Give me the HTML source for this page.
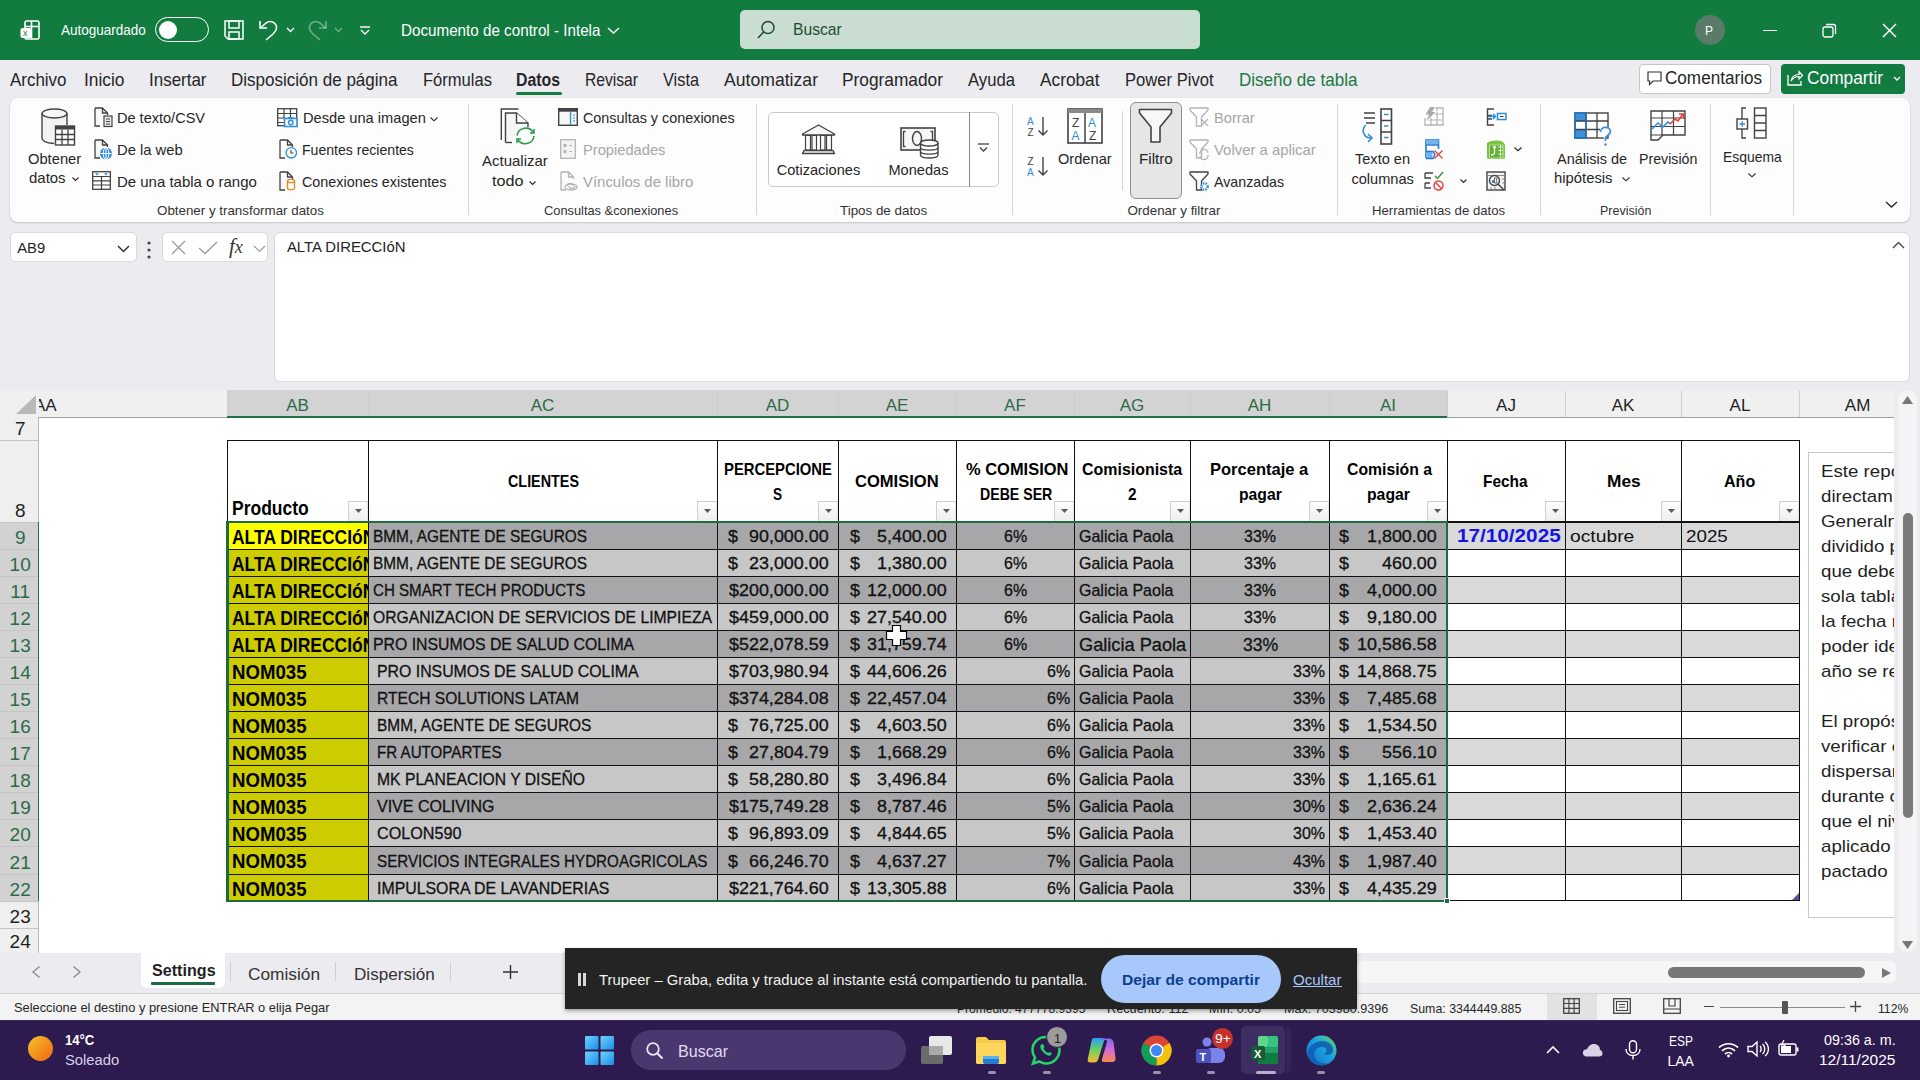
<!DOCTYPE html><html><head><meta charset="utf-8"><title>Excel</title><style>
*{margin:0;padding:0;box-sizing:border-box}
html,body{width:1920px;height:1080px;overflow:hidden;background:#fff;font-family:"Liberation Sans",sans-serif}
.a{position:absolute}
.t{position:absolute;white-space:nowrap;line-height:1}
svg{overflow:visible}
.d{-webkit-text-stroke:0.3px #111}
</style></head><body>
<div class="a" style="left:0px;top:0px;width:1920px;height:60px;background:#117b40;"></div>
<svg class="a" style="left:20px;top:20px;" width="20" height="20" viewBox="0 0 20 20"><rect x="5" y="1" width="14" height="18" rx="1.5" fill="none" stroke="#fff" stroke-width="1.6"/><line x1="11.5" y1="1" x2="11.5" y2="19" stroke="#fff" stroke-width="1.6"/><line x1="5" y1="6.5" x2="19" y2="6.5" stroke="#fff" stroke-width="1.6"/><rect x="0.5" y="8" width="11" height="10" rx="2" fill="#fff"/><text x="3" y="16.3" font-size="9" font-family="Liberation Sans" fill="#117b40">x</text></svg>
<div class="t" style="left:61.25px;top:23.1px;font-size:14px;color:#fff;font-weight:400;transform:scaleX(0.9631);transform-origin:0 0;">Autoguardado</div>
<div class="a" style="left:155px;top:17px;width:54px;height:25px;border:1.5px solid #fff;border-radius:13px"></div>
<div class="a" style="left:159px;top:21px;width:18px;height:18px;background:#fff;border-radius:50%"></div>
<svg class="a" style="left:224px;top:20px;" width="20" height="20" viewBox="0 0 20 20"><path d="M1 1 H19 V19 H4 L1 16 Z" fill="none" stroke="#fff" stroke-width="1.5"/><rect x="5" y="1" width="10" height="7" fill="none" stroke="#fff" stroke-width="1.5"/><rect x="5" y="12" width="10" height="7" fill="none" stroke="#fff" stroke-width="1.5"/></svg>
<svg class="a" style="left:259px;top:20px;" width="20" height="20" viewBox="0 0 20 20"><path d="M1 1 V8 H8" fill="none" stroke="#fff" stroke-width="1.6"/><path d="M1.5 8 L7 3 C11 0 17 2 17.5 7 C18 10 16 12 14 14 L7 20" fill="none" stroke="#fff" stroke-width="1.6"/></svg>
<svg class="a" style="left:286px;top:27px;" width="9" height="6" viewBox="0 0 9 6"><path d="M1 1 L4.5 4.5 L8 1" fill="none" stroke="#fff" stroke-width="1.4"/></svg>
<svg class="a" style="left:307px;top:20px;" width="20" height="20" viewBox="0 0 20 20"><path d="M19 1 V8 H12" fill="none" stroke="rgba(255,255,255,.4)" stroke-width="1.6"/><path d="M18.5 8 L13 3 C9 0 3 2 2.5 7 C2 10 4 12 6 14 L13 20" fill="none" stroke="rgba(255,255,255,.4)" stroke-width="1.6"/></svg>
<svg class="a" style="left:334px;top:27px;" width="9" height="6" viewBox="0 0 9 6"><path d="M1 1 L4.5 4.5 L8 1" fill="none" stroke="rgba(255,255,255,.4)" stroke-width="1.4"/></svg>
<svg class="a" style="left:360px;top:26px;" width="10" height="10" viewBox="0 0 10 10"><line x1="0" y1="1" x2="10" y2="1" stroke="#fff" stroke-width="1.4"/><path d="M1 4 L5 8 L9 4" fill="none" stroke="#fff" stroke-width="1.4"/></svg>
<div class="t" style="left:400.50px;top:21.8px;font-size:16.5px;color:#fff;font-weight:400;transform:scaleX(0.9215);transform-origin:0 0;">Documento de control - Intela</div>
<svg class="a" style="left:607px;top:27px;" width="13" height="7" viewBox="0 0 13 7"><path d="M1 1 L6.5 6 L12 1" fill="none" stroke="#fff" stroke-width="1.5"/></svg>
<div class="a" style="left:740px;top:10px;width:460px;height:39px;background:#c9ddd0;border-radius:5px"></div>
<svg class="a" style="left:757px;top:20px;" width="20" height="20" viewBox="0 0 20 20"><circle cx="11" cy="7.5" r="6" fill="none" stroke="#1d4d33" stroke-width="1.5"/><line x1="6.8" y1="11.8" x2="1" y2="18" stroke="#1d4d33" stroke-width="1.6"/></svg>
<div class="t" style="left:793.00px;top:20.6px;font-size:17px;color:#1d4d33;font-weight:400;transform:scaleX(0.9206);transform-origin:0 0;">Buscar</div>
<div class="a" style="left:1695px;top:15px;width:30px;height:30px;background:#5b7b69;border-radius:50%"></div>
<div class="t" style="left:1705.0px;top:24.8px;font-size:12px;color:#fff;font-weight:400;">P</div>
<div class="a" style="left:1763px;top:30px;width:14px;height:1.4px;background:#fff;"></div>
<svg class="a" style="left:1822px;top:23px;" width="15" height="15" viewBox="0 0 15 15"><rect x="1" y="4" width="10" height="10" rx="2" fill="none" stroke="#fff" stroke-width="1.3"/><path d="M4 1.5 H11.5 Q13.5 1.5 13.5 3.5 V11" fill="none" stroke="#fff" stroke-width="1.3"/></svg>
<svg class="a" style="left:1882px;top:23px;" width="15" height="15" viewBox="0 0 15 15"><path d="M1 1 L14 14 M14 1 L1 14" stroke="#fff" stroke-width="1.5"/></svg>
<div class="a" style="left:0px;top:60px;width:1920px;height:330px;background:#ebebf0;"></div>
<div class="t" style="left:10.00px;top:71.1px;font-size:18.5px;color:#262626;font-weight:400;transform:scaleX(0.9157);transform-origin:0 0;">Archivo</div>
<div class="t" style="left:84.00px;top:71.1px;font-size:18.5px;color:#262626;font-weight:400;transform:scaleX(0.9375);transform-origin:0 0;">Inicio</div>
<div class="t" style="left:149.00px;top:71.1px;font-size:18.5px;color:#262626;font-weight:400;transform:scaleX(0.9171);transform-origin:0 0;">Insertar</div>
<div class="t" style="left:231.00px;top:71.1px;font-size:18.5px;color:#262626;font-weight:400;transform:scaleX(0.9199);transform-origin:0 0;">Disposición de página</div>
<div class="t" style="left:423.00px;top:71.1px;font-size:18.5px;color:#262626;font-weight:400;transform:scaleX(0.8949);transform-origin:0 0;">Fórmulas</div>
<div class="t" style="left:516.00px;top:71.1px;font-size:18.5px;color:#262626;font-weight:700;transform:scaleX(0.8560);transform-origin:0 0;">Datos</div>
<div class="t" style="left:585.00px;top:71.1px;font-size:18.5px;color:#262626;font-weight:400;transform:scaleX(0.8453);transform-origin:0 0;">Revisar</div>
<div class="t" style="left:663.00px;top:71.1px;font-size:18.5px;color:#262626;font-weight:400;transform:scaleX(0.8824);transform-origin:0 0;">Vista</div>
<div class="t" style="left:724.00px;top:71.1px;font-size:18.5px;color:#262626;font-weight:400;transform:scaleX(0.9524);transform-origin:0 0;">Automatizar</div>
<div class="t" style="left:842.00px;top:71.1px;font-size:18.5px;color:#262626;font-weight:400;transform:scaleX(0.9352);transform-origin:0 0;">Programador</div>
<div class="t" style="left:968.00px;top:71.1px;font-size:18.5px;color:#262626;font-weight:400;transform:scaleX(0.9021);transform-origin:0 0;">Ayuda</div>
<div class="t" style="left:1040.00px;top:71.1px;font-size:18.5px;color:#262626;font-weight:400;transform:scaleX(0.9326);transform-origin:0 0;">Acrobat</div>
<div class="t" style="left:1125.00px;top:71.1px;font-size:18.5px;color:#262626;font-weight:400;transform:scaleX(0.8967);transform-origin:0 0;">Power Pivot</div>
<div class="t" style="left:1239.00px;top:71.1px;font-size:18.5px;color:#1b7a45;font-weight:400;transform:scaleX(0.9215);transform-origin:0 0;">Diseño de tabla</div>
<div class="a" style="left:516px;top:92px;width:46px;height:3px;background:#117b40;border-radius:2px"></div>
<div class="a" style="left:1639px;top:64px;width:132px;height:30px;background:#fff;border:1px solid #c6c6c6;border-radius:4px"></div>
<svg class="a" style="left:1647px;top:71px;" width="15" height="15" viewBox="0 0 15 15"><path d="M1 1 H14 V10 H6 L2.5 13.5 V10 H1 Z" fill="none" stroke="#333" stroke-width="1.2"/></svg>
<div class="t" style="left:1665.00px;top:70.2px;font-size:17.5px;color:#262626;font-weight:400;transform:scaleX(0.9778);transform-origin:0 0;">Comentarios</div>
<div class="a" style="left:1781px;top:64px;width:124px;height:30px;background:#117b40;border-radius:4px"></div>
<svg class="a" style="left:1787px;top:70px;" width="16" height="16" viewBox="0 0 16 16"><path d="M1 5 V15 H14 V11" fill="none" stroke="#fff" stroke-width="1.3"/><path d="M4 11 C5 6 8 4.5 12 4.5 V1.5 L15.5 5.5 L12 9 V6.5 C8.5 6.5 6 8 4 11 Z" fill="none" stroke="#fff" stroke-width="1.2"/></svg>
<div class="t" style="left:1807.00px;top:70.2px;font-size:17.5px;color:#fff;font-weight:400;transform:scaleX(0.9896);transform-origin:0 0;">Compartir</div>
<svg class="a" style="left:1893px;top:76px;" width="8" height="5" viewBox="0 0 8 5"><path d="M1 1 L4 4 L7 1" fill="none" stroke="#fff" stroke-width="1.3"/></svg>
<div class="a" style="left:10px;top:98px;width:1900px;height:124px;background:#fdfdfd;border-radius:8px;box-shadow:0 1px 2px rgba(0,0,0,.16),0 0 1px rgba(0,0,0,.12)"></div>
<div class="a" style="left:468px;top:104px;width:1px;height:111px;background:#d6d6d6;"></div>
<div class="a" style="left:756px;top:104px;width:1px;height:111px;background:#d6d6d6;"></div>
<div class="a" style="left:1012px;top:104px;width:1px;height:111px;background:#d6d6d6;"></div>
<div class="a" style="left:1337px;top:104px;width:1px;height:111px;background:#d6d6d6;"></div>
<div class="a" style="left:1540px;top:104px;width:1px;height:111px;background:#d6d6d6;"></div>
<div class="a" style="left:1710px;top:104px;width:1px;height:111px;background:#d6d6d6;"></div>
<div class="a" style="left:1793px;top:104px;width:1px;height:111px;background:#d6d6d6;"></div>
<div class="a" style="left:1122px;top:111px;width:1px;height:79px;background:#d6d6d6;"></div>
<div class="t" style="left:157.30px;top:203.5px;font-size:13.4px;color:#333;font-weight:400;transform:scaleX(0.9964);transform-origin:0 0;">Obtener y transformar datos</div>
<div class="t" style="left:544.30px;top:203.5px;font-size:13.4px;color:#333;font-weight:400;transform:scaleX(0.9579);transform-origin:0 0;">Consultas &amp;conexiones</div>
<div class="t" style="left:840.30px;top:203.5px;font-size:13.4px;color:#333;font-weight:400;transform:scaleX(0.9989);transform-origin:0 0;">Tipos de datos</div>
<div class="t" style="left:1127.40px;top:203.5px;font-size:13.4px;color:#333;font-weight:400;transform:scaleX(1.0000);transform-origin:0 0;">Ordenar y filtrar</div>
<div class="t" style="left:1371.50px;top:203.5px;font-size:13.4px;color:#333;font-weight:400;transform:scaleX(0.9823);transform-origin:0 0;">Herramientas de datos</div>
<div class="t" style="left:1599.50px;top:203.5px;font-size:13.4px;color:#333;font-weight:400;transform:scaleX(0.9328);transform-origin:0 0;">Previsión</div>
<svg class="a" style="left:41px;top:108px;" width="34" height="38" viewBox="0 0 34 38"><path d="M1 5.5 V30 C1 33 6 35 13 35.5 H14 V18 H26 V5.5 Z" fill="#f3f3f3"/><line x1="1" y1="5.5" x2="1" y2="30" stroke="#424242" stroke-width="1.4"/><path d="M1 30 C1 33 6 35 13 35.5" fill="none" stroke="#424242" stroke-width="1.4"/><line x1="26" y1="5.5" x2="26" y2="17" stroke="#424242" stroke-width="1.4"/><ellipse cx="13.5" cy="5.5" rx="12.5" ry="4.5" fill="#f7f7f7" stroke="#424242" stroke-width="1.4"/><rect x="14.5" y="18" width="19" height="19" fill="#fff" stroke="#424242" stroke-width="1.4"/><rect x="14.5" y="18" width="19" height="3.5" fill="#424242"/><path d="M14.5 26.5 H33.5 M14.5 31.5 H33.5 M21 21.5 V37 M27 21.5 V37" stroke="#424242" stroke-width="1.3"/></svg>
<div class="t" style="left:28.20px;top:151.6px;font-size:14.6px;color:#262626;font-weight:400;transform:scaleX(1.0076);transform-origin:0 0;">Obtener</div>
<div class="t" style="left:29.00px;top:171.4px;font-size:14.6px;color:#262626;font-weight:400;transform:scaleX(1.0252);transform-origin:0 0;">datos</div>
<svg class="a" style="left:72px;top:177px;" width="7" height="5" viewBox="0 0 7 5"><path d="M.5 .5 L3.5 3.5 L6.5 .5" fill="none" stroke="#262626" stroke-width="1.1"/></svg>
<svg class="a" style="left:94px;top:107px;" width="19" height="20" viewBox="0 0 19 20"><path d="M1 1 H8.5 L13.5 6 V8 M13.5 6 H8.5 V1 M1 1 V19 H6" fill="#f7f7f7" stroke="#424242" stroke-width="1.3"/><rect x="10" y="9" width="8" height="10.5" fill="#e8e8e8" stroke="#424242" stroke-width="1.2"/><path d="M12 12 H16 M12 14.5 H16 M12 17 H16" stroke="#424242" stroke-width="1"/></svg>
<div class="t" style="left:117.30px;top:110.8px;font-size:14.6px;color:#262626;font-weight:400;transform:scaleX(0.9955);transform-origin:0 0;">De texto/CSV</div>
<svg class="a" style="left:94px;top:139px;" width="19" height="21" viewBox="0 0 19 21"><path d="M1 1 H8.5 L13.5 6 V8 M13.5 6 H8.5 V1 M1 1 V19 H6" fill="#f7f7f7" stroke="#424242" stroke-width="1.3"/><circle cx="12" cy="14.5" r="6" fill="#2f8fdc"/><path d="M6.5 14.5 H17.5 M12 8.5 V20.5" stroke="#fff" stroke-width="1"/><ellipse cx="12" cy="14.5" rx="2.8" ry="6" fill="none" stroke="#fff" stroke-width="1"/></svg>
<div class="t" style="left:117.30px;top:142.6px;font-size:14.6px;color:#262626;font-weight:400;transform:scaleX(1.0123);transform-origin:0 0;">De la web</div>
<svg class="a" style="left:92px;top:171px;" width="19" height="19" viewBox="0 0 19 19"><rect x=".7" y=".7" width="17.6" height="17.6" fill="#fff" stroke="#424242" stroke-width="1.3"/><path d="M.7 5.5 H18.3 M.7 9.8 H18.3 M.7 14 H18.3 M9.5 5.5 V18.3" stroke="#424242" stroke-width="1.2"/><path d="M3 2.3 L5 4.6 L7 2.3 Z M12 2.3 L14 4.6 L16 2.3 Z" fill="#2f8fdc"/></svg>
<div class="t" style="left:117.30px;top:174.6px;font-size:14.6px;color:#262626;font-weight:400;transform:scaleX(1.0257);transform-origin:0 0;">De una tabla o rango</div>
<svg class="a" style="left:277px;top:108px;" width="20" height="19" viewBox="0 0 20 19"><rect x=".7" y=".7" width="19" height="17" fill="#fff" stroke="#424242" stroke-width="1.3"/><path d="M.7 5.5 H19.7 M.7 10 H8 M.7 14.5 H8 M7 .7 V10 M13.5 .7 V10" stroke="#424242" stroke-width="1.2"/><rect x="7.5" y="10.5" width="12.5" height="8" fill="#fff" stroke="#2f8fdc" stroke-width="1.6"/><path d="M10 10.5 L11 9 H16 L17 10.5" fill="#2f8fdc"/><circle cx="13.75" cy="14.5" r="2.2" fill="none" stroke="#2f8fdc" stroke-width="1.4"/></svg>
<div class="t" style="left:302.80px;top:110.8px;font-size:14.6px;color:#262626;font-weight:400;transform:scaleX(1.0024);transform-origin:0 0;">Desde una imagen</div>
<svg class="a" style="left:430px;top:117px;" width="8" height="5" viewBox="0 0 8 5"><path d="M.5 .5 L4 3.8 L7.5 .5" fill="none" stroke="#262626" stroke-width="1.1"/></svg>
<svg class="a" style="left:279px;top:139px;" width="19" height="20" viewBox="0 0 19 20"><path d="M1 1 H8.5 L13.5 6 V8 M13.5 6 H8.5 V1 M1 1 V19 H6" fill="#f7f7f7" stroke="#424242" stroke-width="1.3"/><circle cx="12.3" cy="13.8" r="5.2" fill="#fff" stroke="#2f8fdc" stroke-width="1.4"/><path d="M12 11 V14 H14.5" fill="none" stroke="#424242" stroke-width="1.1"/></svg>
<div class="t" style="left:302.40px;top:142.6px;font-size:14.6px;color:#262626;font-weight:400;transform:scaleX(0.9647);transform-origin:0 0;">Fuentes recientes</div>
<svg class="a" style="left:279px;top:171px;" width="19" height="20" viewBox="0 0 19 20"><path d="M1 1 H8.5 L13.5 6 V8 M13.5 6 H8.5 V1 M1 1 V19 H6" fill="#f7f7f7" stroke="#424242" stroke-width="1.3"/><path d="M8.5 10 V17.5 C8.5 19 15.5 19 15.5 17.5 V10" fill="#fff" stroke="#e08a2c" stroke-width="1.4"/><ellipse cx="12" cy="10" rx="3.5" ry="1.6" fill="#fff" stroke="#e08a2c" stroke-width="1.4"/></svg>
<div class="t" style="left:302.00px;top:174.6px;font-size:14.6px;color:#262626;font-weight:400;transform:scaleX(0.9837);transform-origin:0 0;">Conexiones existentes</div>
<svg class="a" style="left:500px;top:108px;" width="37" height="37" viewBox="0 0 37 37"><path d="M1.3 32 V1 H18.5" fill="none" stroke="#424242" stroke-width="1.4"/><path d="M5.5 34.5 V5 H16.5 L28 15 V19" fill="#f6f6f6" stroke="#424242" stroke-width="1.4"/><path d="M16.5 5 V15 H28" fill="#fff" stroke="#424242" stroke-width="1.4"/><path d="M5.5 34.5 H12" stroke="#424242" stroke-width="1.4"/><path d="M17 27.5 A8.8 8.8 0 0 1 33.5 25 M34 28 A8.8 8.8 0 0 1 17.5 31" fill="none" stroke="#2e9a4c" stroke-width="1.6"/><path d="M30 25 H34 V21" fill="none" stroke="#2e9a4c" stroke-width="1.6"/><path d="M21 31 H17 V35" fill="none" stroke="#2e9a4c" stroke-width="1.6"/></svg>
<div class="t" style="left:482.20px;top:154.1px;font-size:14.6px;color:#262626;font-weight:400;transform:scaleX(1.0265);transform-origin:0 0;">Actualizar</div>
<div class="t" style="left:492.20px;top:174.4px;font-size:14.6px;color:#262626;font-weight:400;transform:scaleX(1.1092);transform-origin:0 0;">todo</div>
<svg class="a" style="left:529px;top:181px;" width="7" height="5" viewBox="0 0 7 5"><path d="M.5 .5 L3.5 3.5 L6.5 .5" fill="none" stroke="#262626" stroke-width="1.1"/></svg>
<svg class="a" style="left:558px;top:108px;" width="20" height="18" viewBox="0 0 20 18"><rect x=".7" y=".7" width="18.6" height="16.6" fill="#f7f7f7" stroke="#424242" stroke-width="1.4"/><rect x=".7" y=".7" width="18.6" height="3" fill="#424242"/><line x1="12.5" y1="3.5" x2="12.5" y2="17.3" stroke="#2f8fdc" stroke-width="1.3"/><path d="M15 7 H17 M15 10 H17 M15 13 H17" stroke="#2f8fdc" stroke-width="1.2"/></svg>
<div class="t" style="left:583.00px;top:110.8px;font-size:14.6px;color:#262626;font-weight:400;transform:scaleX(0.9844);transform-origin:0 0;">Consultas y conexiones</div>
<svg class="a" style="left:560px;top:139px;" width="16" height="20" viewBox="0 0 16 20"><rect x=".7" y=".7" width="14.6" height="18.6" fill="#f4f4f4" stroke="#b4b4b4" stroke-width="1.3"/><rect x="3.5" y="5" width="3" height="3" fill="#b4b4b4"/><rect x="3.5" y="11" width="3" height="3" fill="#b4b4b4"/><path d="M9 6.5 H12 M9 12.5 H12" stroke="#b4b4b4" stroke-width="1"/></svg>
<div class="t" style="left:583.00px;top:142.9px;font-size:14.6px;color:#a6a6a6;font-weight:400;transform:scaleX(1.0061);transform-origin:0 0;">Propiedades</div>
<svg class="a" style="left:560px;top:171px;" width="19" height="20" viewBox="0 0 19 20"><path d="M1 1 H8.5 L13.5 6 V8 M13.5 6 H8.5 V1 M1 1 V19 H6" fill="#f7f7f7" stroke="#b4b4b4" stroke-width="1.3"/><path d="M7 15 a3 2.5 0 0 1 6 0 M9 15 a3 2.5 0 0 0 6 0" fill="none" stroke="#b4b4b4" stroke-width="1.3"/><ellipse cx="11" cy="16" rx="6" ry="3" fill="none" stroke="#b4b4b4" stroke-width="1.3"/></svg>
<div class="t" style="left:583.00px;top:174.6px;font-size:14.6px;color:#a6a6a6;font-weight:400;transform:scaleX(1.0222);transform-origin:0 0;">Vínculos de libro</div>
<div class="a" style="left:768px;top:112px;width:231px;height:75px;background:#fff;border:1px solid #c9c9c9;border-radius:5px"></div>
<div class="a" style="left:969px;top:112px;width:1px;height:75px;background:#8a8a8a;"></div>
<svg class="a" style="left:977px;top:143px;" width="13" height="10" viewBox="0 0 13 10"><line x1="1" y1="1" x2="12" y2="1" stroke="#424242" stroke-width="1.3"/><path d="M3 4.5 L6.5 8 L10 4.5" fill="none" stroke="#424242" stroke-width="1.3"/></svg>
<svg class="a" style="left:801px;top:124px;" width="35" height="31" viewBox="0 0 35 31"><path d="M1.5 10 L17.5 1 L33.5 10 V11 H1.5 Z" fill="#f6f6f6" stroke="#424242" stroke-width="1.4" stroke-linejoin="round"/><path d="M4.5 11.5 H9.5 V26 H4.5 Z M11 11.5 H15.5 V26 H11 Z M19.5 11.5 H24 V26 H19.5 Z M25.5 11.5 H30.5 V26 H25.5 Z" fill="#fafafa" stroke="#424242" stroke-width="1.2"/><path d="M3 26.5 H32 L33.5 29.5 H1.5 Z" fill="#f6f6f6" stroke="#424242" stroke-width="1.4" stroke-linejoin="round"/></svg>
<div class="t" style="left:776.70px;top:162.9px;font-size:14.6px;color:#262626;font-weight:400;transform:scaleX(1.0000);transform-origin:0 0;">Cotizaciones</div>
<svg class="a" style="left:900px;top:127px;" width="40" height="33" viewBox="0 0 40 33"><rect x="1" y="1" width="34" height="22" fill="#f6f6f6" stroke="#424242" stroke-width="1.6"/><path d="M5.5 4.5 H3.5 V19.5 H5.5 M30.5 4.5 H32.5 V19.5 H30.5" fill="none" stroke="#424242" stroke-width="1.3"/><ellipse cx="17" cy="11.5" rx="4.5" ry="7" fill="none" stroke="#424242" stroke-width="1.4"/><path d="M20.5 16 V28 C20.5 32 38 32 38 28 V16" fill="#fff" stroke="#424242" stroke-width="1.4"/><ellipse cx="29.25" cy="16" rx="8.75" ry="3" fill="#fff" stroke="#424242" stroke-width="1.4"/><path d="M20.5 20.5 C20.5 24 38 24 38 20.5 M20.5 24.5 C20.5 28 38 28 38 24.5" fill="none" stroke="#424242" stroke-width="1.3"/></svg>
<div class="t" style="left:888.40px;top:162.9px;font-size:14.6px;color:#262626;font-weight:400;transform:scaleX(1.0000);transform-origin:0 0;">Monedas</div>
<svg class="a" style="left:1027px;top:116px;" width="22" height="21" viewBox="0 0 22 21"><text x="0" y="9" font-size="10" font-family="Liberation Sans" fill="#2f8fdc">A</text><text x="0.5" y="20" font-size="10" font-family="Liberation Sans" fill="#424242">Z</text><path d="M16 1 V19 M11.5 14.5 L16 19 L20.5 14.5" fill="none" stroke="#424242" stroke-width="1.4"/></svg>
<svg class="a" style="left:1027px;top:156px;" width="22" height="21" viewBox="0 0 22 21"><text x="0.5" y="9" font-size="10" font-family="Liberation Sans" fill="#424242">Z</text><text x="0" y="20" font-size="10" font-family="Liberation Sans" fill="#2f8fdc">A</text><path d="M16 1 V19 M11.5 14.5 L16 19 L20.5 14.5" fill="none" stroke="#424242" stroke-width="1.4"/></svg>
<svg class="a" style="left:1067px;top:108px;" width="36" height="36" viewBox="0 0 36 36"><rect x="1" y="1" width="34" height="34" fill="#fff" stroke="#424242" stroke-width="1.6"/><rect x="1" y="1" width="34" height="4" fill="#8a8a8a"/><line x1="18" y1="5" x2="18" y2="35" stroke="#424242" stroke-width="1.5"/><text x="5" y="19" font-size="12" font-family="Liberation Sans" fill="#424242">Z</text><text x="4.5" y="32" font-size="12" font-family="Liberation Sans" fill="#2f8fdc">A</text><text x="21" y="19" font-size="12" font-family="Liberation Sans" fill="#2f8fdc">A</text><text x="22" y="32" font-size="12" font-family="Liberation Sans" fill="#424242">Z</text></svg>
<div class="t" style="left:1058.00px;top:151.5px;font-size:14.6px;color:#262626;font-weight:400;transform:scaleX(1.0019);transform-origin:0 0;">Ordenar</div>
<div class="a" style="left:1130px;top:102px;width:52px;height:97px;background:#e6e6e6;border:1px solid #8f8f8f;border-radius:6px"></div>
<svg class="a" style="left:1138px;top:108px;" width="35" height="36" viewBox="0 0 35 36"><path d="M1.5 1.5 H33.5 V5 L22 19 V34 H13 V19 L1.5 5 Z" fill="#f7f7f7" stroke="#424242" stroke-width="1.6" stroke-linejoin="round"/></svg>
<div class="t" style="left:1138.90px;top:151.5px;font-size:14.6px;color:#262626;font-weight:400;transform:scaleX(1.0432);transform-origin:0 0;">Filtro</div>
<svg class="a" style="left:1189px;top:107px;" width="21" height="21" viewBox="0 0 21 21"><path d="M1 1 H19 V3 L12.5 10 V19 H7.5 V10 L1 3 Z" fill="#fff" stroke="#b4b4b4" stroke-width="1.3" stroke-linejoin="round"/><path d="M12 12 L19 19 M19 12 L12 19" stroke="#b4b4b4" stroke-width="1.3"/></svg>
<div class="t" style="left:1214.20px;top:110.8px;font-size:14.6px;color:#a6a6a6;font-weight:400;transform:scaleX(1.0025);transform-origin:0 0;">Borrar</div>
<svg class="a" style="left:1189px;top:139px;" width="21" height="21" viewBox="0 0 21 21"><path d="M1 1 H19 V3 L12.5 10 V19 H7.5 V10 L1 3 Z" fill="#fff" stroke="#b4b4b4" stroke-width="1.3" stroke-linejoin="round"/><path d="M11 15 A4 4 0 0 1 19 14 M19 16 A4 4 0 0 1 11 17" fill="none" stroke="#b4b4b4" stroke-width="1.3"/></svg>
<div class="t" style="left:1214.20px;top:142.6px;font-size:14.6px;color:#a6a6a6;font-weight:400;transform:scaleX(1.0200);transform-origin:0 0;">Volver a aplicar</div>
<svg class="a" style="left:1189px;top:171px;" width="21" height="21" viewBox="0 0 21 21"><path d="M1 1 H19 V3 L12.5 10 V19 H7.5 V10 L1 3 Z" fill="#fff" stroke="#424242" stroke-width="1.3" stroke-linejoin="round"/><circle cx="15.5" cy="15.5" r="3.2" fill="#fff" stroke="#2f8fdc" stroke-width="2.4" stroke-dasharray="1.6 1"/></svg>
<div class="t" style="left:1214.20px;top:174.6px;font-size:14.6px;color:#262626;font-weight:400;transform:scaleX(0.9750);transform-origin:0 0;">Avanzadas</div>
<svg class="a" style="left:1361px;top:108px;" width="40" height="37" viewBox="0 0 40 37"><path d="M3 5 H14 M3 10 H14 M5 15 H14" stroke="#424242" stroke-width="1.6"/><path d="M5 17 C0 21 2 30 10 30" fill="none" stroke="#2f8fdc" stroke-width="1.6"/><path d="M7 26 L11 30 L7 34" fill="none" stroke="#2f8fdc" stroke-width="1.6"/><rect x="20" y="1" width="10.5" height="35" fill="#fff" stroke="#424242" stroke-width="1.6"/><path d="M20 12.5 H30.5 M20 24 H30.5" stroke="#424242" stroke-width="1.5"/><path d="M23 6.5 H27.5 M23 18 H27.5 M23 29.5 H27.5" stroke="#2f8fdc" stroke-width="1.4"/></svg>
<div class="t" style="left:1354.60px;top:151.5px;font-size:14.6px;color:#262626;font-weight:400;transform:scaleX(0.9964);transform-origin:0 0;">Texto en</div>
<div class="t" style="left:1351.40px;top:171.6px;font-size:14.6px;color:#262626;font-weight:400;transform:scaleX(1.0000);transform-origin:0 0;">columnas</div>
<svg class="a" style="left:1424px;top:107px;" width="20" height="19" viewBox="0 0 20 19"><path d="M8 1 H19 V18 H1 V11" fill="#fff" stroke="#b4b4b4" stroke-width="1.3"/><path d="M1 13 H19 M8 7 H19 M13 1 V18 M7 9 V18" stroke="#b4b4b4" stroke-width="1.2"/><path d="M6 0 H11 L8 5 H11.5 L2.5 14 L5 7.5 H1.5 Z" fill="#fff" stroke="#fff" stroke-width="2"/><path d="M6 0 H11 L8 5 H11.5 L2.5 14 L5 7.5 H1.5 Z" fill="#a9a9a9"/></svg>
<svg class="a" style="left:1424px;top:139px;" width="20" height="21" viewBox="0 0 20 21"><path d="M2 19 V1 H14.5 V10" fill="none" stroke="#1f77d0" stroke-width="1.6"/><rect x="2" y="1" width="12.5" height="4.5" fill="#74b4ee"/><path d="M2 6 H14.5" stroke="#1f77d0" stroke-width="1.4"/><rect x="2" y="13" width="6.5" height="6" fill="#74b4ee"/><path d="M2 12.5 H9 L11 15.5 L9 19.5 H2" fill="none" stroke="#1f77d0" stroke-width="1.4"/><path d="M10.5 11.5 L18.5 19.5 M18.5 11.5 L10.5 19.5" stroke="#e2403b" stroke-width="1.3"/></svg>
<svg class="a" style="left:1424px;top:171px;" width="21" height="20" viewBox="0 0 21 20"><path d="M1 2 H9 M1 2 V7 H7 M1 12 V17 H7 M1 12 H6" fill="none" stroke="#424242" stroke-width="1.3"/><path d="M11 5 L13.5 7.5 L19 1" fill="none" stroke="#2e9a4c" stroke-width="1.5"/><circle cx="14.5" cy="14.5" r="4.5" fill="#fff" stroke="#e2403b" stroke-width="1.5"/><path d="M11.5 11.5 L17.5 17.5" stroke="#e2403b" stroke-width="1.5"/></svg>
<svg class="a" style="left:1460px;top:179px;" width="7" height="5" viewBox="0 0 7 5"><path d="M.5 .5 L3.5 3.5 L6.5 .5" fill="none" stroke="#262626" stroke-width="1.1"/></svg>
<svg class="a" style="left:1486px;top:108px;" width="21" height="18" viewBox="0 0 21 18"><path d="M8 1 H1.5 V7.5 H6 M1.5 7.5 V17 H8 M1.5 11 H6" fill="none" stroke="#424242" stroke-width="1.4"/><path d="M2 8.5 H9.5 M7 6 L9.5 8.5 L7 11" fill="none" stroke="#2b8fdc" stroke-width="1.5"/><rect x="11.5" y="5.5" width="8.5" height="6" fill="#fff" stroke="#2b8fdc" stroke-width="1.5"/><path d="M14 8.5 H17.5" stroke="#424242" stroke-width="1"/></svg>
<svg class="a" style="left:1486px;top:139px;" width="20" height="21" viewBox="0 0 20 21"><path d="M1 4 C5 1 13 1 17 3 L19 6 V19 L17 20 H3 L1 19 Z" fill="#7cc242"/><path d="M3.5 6 H17 V19 H3.5 Z" fill="#63b132" stroke="#c9e7b0" stroke-width=".8"/><path d="M12 8 H17 M12 11.5 H17 M12 15 H17 M14.5 6 V19" stroke="#d8efc6" stroke-width="1"/><path d="M8.5 7.5 V13.5 C8.5 15 7 16 5 16" fill="none" stroke="#fff" stroke-width="1.3"/><path d="M7 9 L8.5 7.2 L10 9" fill="none" stroke="#fff" stroke-width="1.1"/></svg>
<svg class="a" style="left:1514px;top:147px;" width="8" height="5" viewBox="0 0 8 5"><path d="M.5 .5 L4 3.8 L7.5 .5" fill="none" stroke="#262626" stroke-width="1.2"/></svg>
<svg class="a" style="left:1486px;top:171px;" width="20" height="20" viewBox="0 0 20 20"><rect x="1" y="1" width="18" height="18" fill="#f4f4f4" stroke="#424242" stroke-width="1.4"/><path d="M1 4.5 H19 M16 8 H19 M16 12 H19 M5 16 V19 M9 16 V19" stroke="#8a8a8a" stroke-width="1"/><circle cx="8.5" cy="9.5" r="5" fill="#fff" stroke="#424242" stroke-width="1.4"/><rect x="6" y="9" width="2.2" height="3" fill="#2b8fdc"/><rect x="8.6" y="7" width="2.2" height="5" fill="#fff" stroke="#424242" stroke-width=".8"/><path d="M12 13 L18 19" stroke="#424242" stroke-width="1.5"/></svg>
<svg class="a" style="left:1574px;top:112px;" width="39" height="34" viewBox="0 0 39 34"><rect x="1" y="1" width="33" height="25" fill="#fff" stroke="#424242" stroke-width="1.4"/><rect x="1" y="1" width="11" height="8" fill="#3d8fd8"/><rect x="1" y="17.5" width="11" height="8.5" fill="#3d8fd8"/><path d="M1 9 H34 M1 17.5 H26 M12 1 V26 M23 1 V26" stroke="#424242" stroke-width="1.3"/><path d="M1 1 H12 V26 H1 Z" fill="none" stroke="#1f6fc0" stroke-width="1.3"/><path d="M26.5 20 C26.5 14 36.5 14 36.5 19.5 C36.5 23 31.5 23 31.5 27 V29" fill="#fff" stroke="#2f8fdc" stroke-width="1.7"/><circle cx="31.5" cy="32.5" r="1.2" fill="#2f8fdc"/></svg>
<div class="t" style="left:1557.40px;top:151.6px;font-size:14.6px;color:#262626;font-weight:400;transform:scaleX(0.9929);transform-origin:0 0;">Análisis de</div>
<div class="t" style="left:1554.40px;top:170.9px;font-size:14.6px;color:#262626;font-weight:400;transform:scaleX(1.0156);transform-origin:0 0;">hipótesis</div>
<svg class="a" style="left:1622px;top:177px;" width="8" height="5" viewBox="0 0 8 5"><path d="M.5 .5 L4 3.8 L7.5 .5" fill="none" stroke="#262626" stroke-width="1.1"/></svg>
<svg class="a" style="left:1650px;top:110px;" width="36" height="31" viewBox="0 0 36 31"><path d="M1 1 H35 V25 H13 L8 30 H1 Z" fill="#fff" stroke="#424242" stroke-width="1.4"/><path d="M1 8 H35 M1 16.5 H35 M12 1 V25 M23.5 1 V25 M1 25 H13" stroke="#424242" stroke-width="1.2"/><path d="M2 19 L8 13 L13 17 L18 12 L20 14" fill="none" stroke="#2f8fdc" stroke-width="1.6"/><path d="M20 14 L25 9 L28 11 L33 4 M29 4 H33.5 V8.5" fill="none" stroke="#e2403b" stroke-width="1.6"/></svg>
<div class="t" style="left:1639.30px;top:151.6px;font-size:14.6px;color:#262626;font-weight:400;transform:scaleX(0.9717);transform-origin:0 0;">Previsión</div>
<svg class="a" style="left:1736px;top:107px;" width="31" height="32" viewBox="0 0 31 32"><path d="M10 1 H6 V31 H10" fill="none" stroke="#424242" stroke-width="1.4"/><rect x="1" y="12" width="10.5" height="10" fill="#fff" stroke="#424242" stroke-width="1.4"/><path d="M3.5 17 H9 M6.2 14.2 V19.8" stroke="#2f8fdc" stroke-width="1.4"/><rect x="18.5" y="1" width="11.5" height="30" fill="#fff" stroke="#424242" stroke-width="1.4"/><path d="M18.5 8.5 H30 M18.5 16 H30 M18.5 23.5 H30" stroke="#424242" stroke-width="1.3"/></svg>
<div class="t" style="left:1722.60px;top:149.6px;font-size:14.6px;color:#262626;font-weight:400;transform:scaleX(0.9531);transform-origin:0 0;">Esquema</div>
<svg class="a" style="left:1748px;top:173px;" width="8" height="5" viewBox="0 0 8 5"><path d="M.5 .5 L4 3.8 L7.5 .5" fill="none" stroke="#262626" stroke-width="1.1"/></svg>
<svg class="a" style="left:1885px;top:201px;" width="13" height="7" viewBox="0 0 13 7"><path d="M1 1 L6.5 6 L12 1" fill="none" stroke="#262626" stroke-width="1.3"/></svg>
<div class="a" style="left:10px;top:232px;width:127px;height:30px;background:#fff;border:1px solid #d9d9dd;border-radius:5px"></div>
<div class="t" style="left:17.2px;top:240.5px;font-size:14.8px;color:#242424;font-weight:400;">AB9</div>
<svg class="a" style="left:117px;top:245px;" width="13" height="8" viewBox="0 0 13 8"><path d="M1 1 L6.5 6.5 L12 1" fill="none" stroke="#333" stroke-width="1.5"/></svg>
<svg class="a" style="left:147px;top:241px;" width="4" height="18" viewBox="0 0 4 18"><circle cx="2" cy="2" r="1.6" fill="#444"/><circle cx="2" cy="9" r="1.6" fill="#444"/><circle cx="2" cy="16" r="1.6" fill="#444"/></svg>
<div class="a" style="left:162px;top:232px;width:106px;height:30px;background:#fff;border:1px solid #d9d9dd;border-radius:5px"></div>
<svg class="a" style="left:171px;top:240px;" width="15" height="15" viewBox="0 0 15 15"><path d="M1 1 L14 14 M14 1 L1 14" stroke="#9a9a9a" stroke-width="1.3"/></svg>
<svg class="a" style="left:198px;top:241px;" width="20" height="13" viewBox="0 0 20 13"><path d="M1 7 L7 12.5 L19 1" fill="none" stroke="#9a9a9a" stroke-width="1.3"/></svg>
<div class="t" style="left:229px;top:236px;font-size:21px;font-family:'Liberation Serif',serif;font-style:italic;color:#333">f<span style="font-size:18px">x</span></div>
<svg class="a" style="left:253px;top:245px;" width="13" height="8" viewBox="0 0 13 8"><path d="M1 1 L6.5 6.5 L12 1" fill="none" stroke="#9a9a9a" stroke-width="1.2"/></svg>
<div class="a" style="left:274px;top:232px;width:1636px;height:150px;background:#fff;border:1px solid #d9d9dd;border-radius:6px"></div>
<div class="t" style="left:286.9px;top:240.4px;font-size:14.9px;color:#242424;font-weight:400;">ALTA DIRECCIóN</div>
<svg class="a" style="left:1892px;top:241px;" width="13" height="8" viewBox="0 0 13 8"><path d="M1 7 L6.5 1.5 L12 7" fill="none" stroke="#444" stroke-width="1.3"/></svg>
<div class="a" style="left:0px;top:390px;width:1894px;height:27px;background:#f0f0f0;"></div>
<div class="a" style="left:227px;top:390px;width:1220px;height:27px;background:#d3d3d3;"></div>
<div class="a" style="left:227px;top:391px;width:1px;height:26px;background:#cdcdcd;"></div>
<div class="a" style="left:368px;top:391px;width:1px;height:26px;background:#cdcdcd;"></div>
<div class="a" style="left:717px;top:391px;width:1px;height:26px;background:#cdcdcd;"></div>
<div class="a" style="left:838px;top:391px;width:1px;height:26px;background:#cdcdcd;"></div>
<div class="a" style="left:956px;top:391px;width:1px;height:26px;background:#cdcdcd;"></div>
<div class="a" style="left:1074px;top:391px;width:1px;height:26px;background:#cdcdcd;"></div>
<div class="a" style="left:1190px;top:391px;width:1px;height:26px;background:#cdcdcd;"></div>
<div class="a" style="left:1329px;top:391px;width:1px;height:26px;background:#cdcdcd;"></div>
<div class="a" style="left:1447px;top:391px;width:1px;height:26px;background:#cdcdcd;"></div>
<div class="a" style="left:1565px;top:391px;width:1px;height:26px;background:#cdcdcd;"></div>
<div class="a" style="left:1681px;top:391px;width:1px;height:26px;background:#cdcdcd;"></div>
<div class="a" style="left:1799px;top:391px;width:1px;height:26px;background:#cdcdcd;"></div>
<div class="a" style="left:1894px;top:391px;width:1px;height:26px;background:#cdcdcd;"></div>
<div class="a" style="left:0px;top:417px;width:227px;height:1px;background:#9f9f9f;"></div>
<div class="a" style="left:227px;top:415.5px;width:1220px;height:2px;background:#217346;"></div>
<div class="a" style="left:1447px;top:417px;width:447px;height:1px;background:#9f9f9f;"></div>
<svg class="a" style="left:16px;top:395px;" width="20" height="19" viewBox="0 0 20 19"><path d="M20 0 V19 H0 Z" fill="#b9b9b9"/></svg>
<div class="a" style="left:39px;top:390px;width:40px;height:27px;overflow:hidden"><div class="t" style="left:-5.0px;top:7.1px;font-size:17px;color:#1f1f1f;font-weight:400;">AA</div></div>
<div class="t" style="left:286.2px;top:397.1px;font-size:17px;color:#2b6b47;font-weight:400;">AB</div>
<div class="t" style="left:530.7px;top:397.1px;font-size:17px;color:#2b6b47;font-weight:400;">AC</div>
<div class="t" style="left:765.7px;top:397.1px;font-size:17px;color:#2b6b47;font-weight:400;">AD</div>
<div class="t" style="left:885.7px;top:397.1px;font-size:17px;color:#2b6b47;font-weight:400;">AE</div>
<div class="t" style="left:1004.1px;top:397.1px;font-size:17px;color:#2b6b47;font-weight:400;">AF</div>
<div class="t" style="left:1119.7px;top:397.1px;font-size:17px;color:#2b6b47;font-weight:400;">AG</div>
<div class="t" style="left:1247.7px;top:397.1px;font-size:17px;color:#2b6b47;font-weight:400;">AH</div>
<div class="t" style="left:1380.0px;top:397.1px;font-size:17px;color:#2b6b47;font-weight:400;">AI</div>
<div class="t" style="left:1496.1px;top:397.1px;font-size:17px;color:#1f1f1f;font-weight:400;">AJ</div>
<div class="t" style="left:1611.7px;top:397.1px;font-size:17px;color:#1f1f1f;font-weight:400;">AK</div>
<div class="t" style="left:1729.6px;top:397.1px;font-size:17px;color:#1f1f1f;font-weight:400;">AL</div>
<div class="t" style="left:1844.8px;top:397.1px;font-size:17px;color:#1f1f1f;font-weight:400;">AM</div>
<div class="a" style="left:0px;top:417px;width:39px;height:536px;background:#efefef;"></div>
<div class="a" style="left:0px;top:522px;width:38px;height:379px;background:#d2d2d2;"></div>
<div class="a" style="left:0px;top:440px;width:38px;height:1px;background:#c4c4c4;"></div>
<div class="t" style="left:14.9px;top:418.6px;font-size:19px;color:#1f1f1f;font-weight:400;">7</div>
<div class="a" style="left:0px;top:522px;width:38px;height:1px;background:#c4c4c4;"></div>
<div class="t" style="left:14.9px;top:500.6px;font-size:19px;color:#1f1f1f;font-weight:400;">8</div>
<div class="a" style="left:0px;top:549px;width:38px;height:1px;background:#c4c4c4;"></div>
<div class="t" style="left:14.9px;top:527.6px;font-size:19px;color:#2b6b47;font-weight:400;">9</div>
<div class="a" style="left:0px;top:576px;width:38px;height:1px;background:#c4c4c4;"></div>
<div class="t" style="left:9.6px;top:554.6px;font-size:19px;color:#2b6b47;font-weight:400;">10</div>
<div class="a" style="left:0px;top:603px;width:38px;height:1px;background:#c4c4c4;"></div>
<div class="t" style="left:10.3px;top:581.6px;font-size:19px;color:#2b6b47;font-weight:400;">11</div>
<div class="a" style="left:0px;top:630px;width:38px;height:1px;background:#c4c4c4;"></div>
<div class="t" style="left:9.6px;top:608.6px;font-size:19px;color:#2b6b47;font-weight:400;">12</div>
<div class="a" style="left:0px;top:657px;width:38px;height:1px;background:#c4c4c4;"></div>
<div class="t" style="left:9.6px;top:635.6px;font-size:19px;color:#2b6b47;font-weight:400;">13</div>
<div class="a" style="left:0px;top:684px;width:38px;height:1px;background:#c4c4c4;"></div>
<div class="t" style="left:9.6px;top:662.6px;font-size:19px;color:#2b6b47;font-weight:400;">14</div>
<div class="a" style="left:0px;top:711px;width:38px;height:1px;background:#c4c4c4;"></div>
<div class="t" style="left:9.6px;top:689.6px;font-size:19px;color:#2b6b47;font-weight:400;">15</div>
<div class="a" style="left:0px;top:738px;width:38px;height:1px;background:#c4c4c4;"></div>
<div class="t" style="left:9.6px;top:716.6px;font-size:19px;color:#2b6b47;font-weight:400;">16</div>
<div class="a" style="left:0px;top:765px;width:38px;height:1px;background:#c4c4c4;"></div>
<div class="t" style="left:9.6px;top:743.6px;font-size:19px;color:#2b6b47;font-weight:400;">17</div>
<div class="a" style="left:0px;top:792px;width:38px;height:1px;background:#c4c4c4;"></div>
<div class="t" style="left:9.6px;top:770.6px;font-size:19px;color:#2b6b47;font-weight:400;">18</div>
<div class="a" style="left:0px;top:819px;width:38px;height:1px;background:#c4c4c4;"></div>
<div class="t" style="left:9.6px;top:797.6px;font-size:19px;color:#2b6b47;font-weight:400;">19</div>
<div class="a" style="left:0px;top:846px;width:38px;height:1px;background:#c4c4c4;"></div>
<div class="t" style="left:9.6px;top:824.6px;font-size:19px;color:#2b6b47;font-weight:400;">20</div>
<div class="a" style="left:0px;top:874px;width:38px;height:1px;background:#c4c4c4;"></div>
<div class="t" style="left:9.6px;top:852.6px;font-size:19px;color:#2b6b47;font-weight:400;">21</div>
<div class="a" style="left:0px;top:901px;width:38px;height:1px;background:#c4c4c4;"></div>
<div class="t" style="left:9.6px;top:879.6px;font-size:19px;color:#2b6b47;font-weight:400;">22</div>
<div class="a" style="left:0px;top:928px;width:38px;height:1px;background:#c4c4c4;"></div>
<div class="t" style="left:9.6px;top:906.6px;font-size:19px;color:#1f1f1f;font-weight:400;">23</div>
<div class="t" style="left:9.6px;top:931.6px;font-size:19px;color:#1f1f1f;font-weight:400;">24</div>
<div class="a" style="left:38px;top:417px;width:1px;height:105px;background:#b9b9b9;"></div>
<div class="a" style="left:38px;top:901px;width:1px;height:52px;background:#b9b9b9;"></div>
<div class="a" style="left:37.5px;top:522px;width:2px;height:379px;background:#217346;"></div>
<div class="a" style="left:39px;top:418px;width:1855px;height:535px;background:#ffffff;"></div>
<div class="a" style="left:227px;top:440px;width:1572px;height:82px;background:#ffffff;"></div>
<div class="t" style="left:231.50px;top:499.0px;font-size:19.5px;color:#000;font-weight:700;transform:scaleX(0.8972);transform-origin:0 0;">Producto</div>
<div class="t" style="left:507.60px;top:473.0px;font-size:17px;color:#000;font-weight:700;transform:scaleX(0.8442);transform-origin:0 0;">CLIENTES</div>
<div class="t" style="left:723.70px;top:460.6px;font-size:17px;color:#000;font-weight:700;transform:scaleX(0.8723);transform-origin:0 0;">PERCEPCIONE</div>
<div class="t" style="left:773.00px;top:485.9px;font-size:17px;color:#000;font-weight:700;transform:scaleX(0.7965);transform-origin:0 0;">S</div>
<div class="t" style="left:855.40px;top:473.1px;font-size:17px;color:#000;font-weight:700;transform:scaleX(0.9732);transform-origin:0 0;">COMISION</div>
<div class="t" style="left:966.10px;top:460.8px;font-size:17px;color:#000;font-weight:700;transform:scaleX(0.9679);transform-origin:0 0;">% COMISION</div>
<div class="t" style="left:980.00px;top:486.0px;font-size:17px;color:#000;font-weight:700;transform:scaleX(0.8320);transform-origin:0 0;">DEBE SER</div>
<div class="t" style="left:1081.50px;top:460.8px;font-size:17px;color:#000;font-weight:700;transform:scaleX(0.9383);transform-origin:0 0;">Comisionista</div>
<div class="t" style="left:1127.60px;top:486.0px;font-size:17px;color:#000;font-weight:700;transform:scaleX(0.9053);transform-origin:0 0;">2</div>
<div class="t" style="left:1210.40px;top:460.8px;font-size:17px;color:#000;font-weight:700;transform:scaleX(0.9724);transform-origin:0 0;">Porcentaje a</div>
<div class="t" style="left:1238.50px;top:486.0px;font-size:17px;color:#000;font-weight:700;transform:scaleX(0.9244);transform-origin:0 0;">pagar</div>
<div class="t" style="left:1347.10px;top:460.8px;font-size:17px;color:#000;font-weight:700;transform:scaleX(0.9281);transform-origin:0 0;">Comisión a</div>
<div class="t" style="left:1366.70px;top:486.0px;font-size:17px;color:#000;font-weight:700;transform:scaleX(0.9266);transform-origin:0 0;">pagar</div>
<div class="t" style="left:1483.40px;top:472.8px;font-size:17px;color:#000;font-weight:700;transform:scaleX(0.9087);transform-origin:0 0;">Fecha</div>
<div class="t" style="left:1606.70px;top:472.8px;font-size:17px;color:#000;font-weight:700;transform:scaleX(1.0181);transform-origin:0 0;">Mes</div>
<div class="t" style="left:1724.20px;top:472.8px;font-size:17px;color:#000;font-weight:700;transform:scaleX(0.9455);transform-origin:0 0;">Año</div>
<div class="a" style="left:347.5px;top:500.5px;width:20px;height:20.5px;background:linear-gradient(#fdfdfd,#efefef);border-top:1px solid #cfcfcf;border-left:1px solid #cfcfcf;border-right:1px solid #e6e6e6"></div>
<svg class="a" style="left:354.5px;top:508.5px;" width="7" height="5" viewBox="0 0 7 5"><path d="M0 0 H7 L3.5 4 Z" fill="#5a5a5a"/></svg>
<div class="a" style="left:696.5px;top:500.5px;width:20px;height:20.5px;background:linear-gradient(#fdfdfd,#efefef);border-top:1px solid #cfcfcf;border-left:1px solid #cfcfcf;border-right:1px solid #e6e6e6"></div>
<svg class="a" style="left:703.5px;top:508.5px;" width="7" height="5" viewBox="0 0 7 5"><path d="M0 0 H7 L3.5 4 Z" fill="#5a5a5a"/></svg>
<div class="a" style="left:817.5px;top:500.5px;width:20px;height:20.5px;background:linear-gradient(#fdfdfd,#efefef);border-top:1px solid #cfcfcf;border-left:1px solid #cfcfcf;border-right:1px solid #e6e6e6"></div>
<svg class="a" style="left:824.5px;top:508.5px;" width="7" height="5" viewBox="0 0 7 5"><path d="M0 0 H7 L3.5 4 Z" fill="#5a5a5a"/></svg>
<div class="a" style="left:935.5px;top:500.5px;width:20px;height:20.5px;background:linear-gradient(#fdfdfd,#efefef);border-top:1px solid #cfcfcf;border-left:1px solid #cfcfcf;border-right:1px solid #e6e6e6"></div>
<svg class="a" style="left:942.5px;top:508.5px;" width="7" height="5" viewBox="0 0 7 5"><path d="M0 0 H7 L3.5 4 Z" fill="#5a5a5a"/></svg>
<div class="a" style="left:1053.5px;top:500.5px;width:20px;height:20.5px;background:linear-gradient(#fdfdfd,#efefef);border-top:1px solid #cfcfcf;border-left:1px solid #cfcfcf;border-right:1px solid #e6e6e6"></div>
<svg class="a" style="left:1060.5px;top:508.5px;" width="7" height="5" viewBox="0 0 7 5"><path d="M0 0 H7 L3.5 4 Z" fill="#5a5a5a"/></svg>
<div class="a" style="left:1169.5px;top:500.5px;width:20px;height:20.5px;background:linear-gradient(#fdfdfd,#efefef);border-top:1px solid #cfcfcf;border-left:1px solid #cfcfcf;border-right:1px solid #e6e6e6"></div>
<svg class="a" style="left:1176.5px;top:508.5px;" width="7" height="5" viewBox="0 0 7 5"><path d="M0 0 H7 L3.5 4 Z" fill="#5a5a5a"/></svg>
<div class="a" style="left:1308.5px;top:500.5px;width:20px;height:20.5px;background:linear-gradient(#fdfdfd,#efefef);border-top:1px solid #cfcfcf;border-left:1px solid #cfcfcf;border-right:1px solid #e6e6e6"></div>
<svg class="a" style="left:1315.5px;top:508.5px;" width="7" height="5" viewBox="0 0 7 5"><path d="M0 0 H7 L3.5 4 Z" fill="#5a5a5a"/></svg>
<div class="a" style="left:1426.5px;top:500.5px;width:20px;height:20.5px;background:linear-gradient(#fdfdfd,#efefef);border-top:1px solid #cfcfcf;border-left:1px solid #cfcfcf;border-right:1px solid #e6e6e6"></div>
<svg class="a" style="left:1433.5px;top:508.5px;" width="7" height="5" viewBox="0 0 7 5"><path d="M0 0 H7 L3.5 4 Z" fill="#5a5a5a"/></svg>
<div class="a" style="left:1544.5px;top:500.5px;width:20px;height:20.5px;background:linear-gradient(#fdfdfd,#efefef);border-top:1px solid #cfcfcf;border-left:1px solid #cfcfcf;border-right:1px solid #e6e6e6"></div>
<svg class="a" style="left:1551.5px;top:508.5px;" width="7" height="5" viewBox="0 0 7 5"><path d="M0 0 H7 L3.5 4 Z" fill="#5a5a5a"/></svg>
<div class="a" style="left:1660.5px;top:500.5px;width:20px;height:20.5px;background:linear-gradient(#fdfdfd,#efefef);border-top:1px solid #cfcfcf;border-left:1px solid #cfcfcf;border-right:1px solid #e6e6e6"></div>
<svg class="a" style="left:1667.5px;top:508.5px;" width="7" height="5" viewBox="0 0 7 5"><path d="M0 0 H7 L3.5 4 Z" fill="#5a5a5a"/></svg>
<div class="a" style="left:1778.5px;top:500.5px;width:20px;height:20.5px;background:linear-gradient(#fdfdfd,#efefef);border-top:1px solid #cfcfcf;border-left:1px solid #cfcfcf;border-right:1px solid #e6e6e6"></div>
<svg class="a" style="left:1785.5px;top:508.5px;" width="7" height="5" viewBox="0 0 7 5"><path d="M0 0 H7 L3.5 4 Z" fill="#5a5a5a"/></svg>
<div class="a" style="left:227px;top:522px;width:141px;height:27px;background:#ffff00;"></div>
<div class="a" style="left:368px;top:522px;width:1079px;height:27px;background:#a7a7a9;"></div>
<div class="a" style="left:1447px;top:522px;width:352px;height:27px;background:#d9d9d9;"></div>
<div class="a" style="left:227px;top:549px;width:141px;height:27px;background:#cccc00;"></div>
<div class="a" style="left:368px;top:549px;width:1079px;height:27px;background:#c7c7c7;"></div>
<div class="a" style="left:1447px;top:549px;width:352px;height:27px;background:#ffffff;"></div>
<div class="a" style="left:227px;top:576px;width:141px;height:27px;background:#cccc00;"></div>
<div class="a" style="left:368px;top:576px;width:1079px;height:27px;background:#a7a7a9;"></div>
<div class="a" style="left:1447px;top:576px;width:352px;height:27px;background:#d9d9d9;"></div>
<div class="a" style="left:227px;top:603px;width:141px;height:27px;background:#cccc00;"></div>
<div class="a" style="left:368px;top:603px;width:1079px;height:27px;background:#c7c7c7;"></div>
<div class="a" style="left:1447px;top:603px;width:352px;height:27px;background:#ffffff;"></div>
<div class="a" style="left:227px;top:630px;width:141px;height:27px;background:#cccc00;"></div>
<div class="a" style="left:368px;top:630px;width:1079px;height:27px;background:#a7a7a9;"></div>
<div class="a" style="left:1447px;top:630px;width:352px;height:27px;background:#d9d9d9;"></div>
<div class="a" style="left:227px;top:657px;width:141px;height:27px;background:#cccc00;"></div>
<div class="a" style="left:368px;top:657px;width:1079px;height:27px;background:#c7c7c7;"></div>
<div class="a" style="left:1447px;top:657px;width:352px;height:27px;background:#ffffff;"></div>
<div class="a" style="left:227px;top:684px;width:141px;height:27px;background:#cccc00;"></div>
<div class="a" style="left:368px;top:684px;width:1079px;height:27px;background:#a7a7a9;"></div>
<div class="a" style="left:1447px;top:684px;width:352px;height:27px;background:#d9d9d9;"></div>
<div class="a" style="left:227px;top:711px;width:141px;height:27px;background:#cccc00;"></div>
<div class="a" style="left:368px;top:711px;width:1079px;height:27px;background:#c7c7c7;"></div>
<div class="a" style="left:1447px;top:711px;width:352px;height:27px;background:#ffffff;"></div>
<div class="a" style="left:227px;top:738px;width:141px;height:27px;background:#cccc00;"></div>
<div class="a" style="left:368px;top:738px;width:1079px;height:27px;background:#a7a7a9;"></div>
<div class="a" style="left:1447px;top:738px;width:352px;height:27px;background:#d9d9d9;"></div>
<div class="a" style="left:227px;top:765px;width:141px;height:27px;background:#cccc00;"></div>
<div class="a" style="left:368px;top:765px;width:1079px;height:27px;background:#c7c7c7;"></div>
<div class="a" style="left:1447px;top:765px;width:352px;height:27px;background:#ffffff;"></div>
<div class="a" style="left:227px;top:792px;width:141px;height:27px;background:#cccc00;"></div>
<div class="a" style="left:368px;top:792px;width:1079px;height:27px;background:#a7a7a9;"></div>
<div class="a" style="left:1447px;top:792px;width:352px;height:27px;background:#d9d9d9;"></div>
<div class="a" style="left:227px;top:819px;width:141px;height:27px;background:#cccc00;"></div>
<div class="a" style="left:368px;top:819px;width:1079px;height:27px;background:#c7c7c7;"></div>
<div class="a" style="left:1447px;top:819px;width:352px;height:27px;background:#ffffff;"></div>
<div class="a" style="left:227px;top:846px;width:141px;height:28px;background:#cccc00;"></div>
<div class="a" style="left:368px;top:846px;width:1079px;height:28px;background:#a7a7a9;"></div>
<div class="a" style="left:1447px;top:846px;width:352px;height:28px;background:#d9d9d9;"></div>
<div class="a" style="left:227px;top:874px;width:141px;height:27px;background:#cccc00;"></div>
<div class="a" style="left:368px;top:874px;width:1079px;height:27px;background:#c7c7c7;"></div>
<div class="a" style="left:1447px;top:874px;width:352px;height:27px;background:#ffffff;"></div>
<div class="a" style="left:227px;top:548.5px;width:1572px;height:1px;background:#111;"></div>
<div class="a" style="left:227px;top:575.5px;width:1572px;height:1px;background:#111;"></div>
<div class="a" style="left:227px;top:602.5px;width:1572px;height:1px;background:#111;"></div>
<div class="a" style="left:227px;top:629.5px;width:1572px;height:1px;background:#111;"></div>
<div class="a" style="left:227px;top:656.5px;width:1572px;height:1px;background:#111;"></div>
<div class="a" style="left:227px;top:683.5px;width:1572px;height:1px;background:#111;"></div>
<div class="a" style="left:227px;top:710.5px;width:1572px;height:1px;background:#111;"></div>
<div class="a" style="left:227px;top:737.5px;width:1572px;height:1px;background:#111;"></div>
<div class="a" style="left:227px;top:764.5px;width:1572px;height:1px;background:#111;"></div>
<div class="a" style="left:227px;top:791.5px;width:1572px;height:1px;background:#111;"></div>
<div class="a" style="left:227px;top:818.5px;width:1572px;height:1px;background:#111;"></div>
<div class="a" style="left:227px;top:845.5px;width:1572px;height:1px;background:#111;"></div>
<div class="a" style="left:227px;top:873.5px;width:1572px;height:1px;background:#111;"></div>
<div class="a" style="left:227px;top:440px;width:1572px;height:1.3px;background:#111;"></div>
<div class="a" style="left:1447px;top:521px;width:352px;height:2.2px;background:#111;"></div>
<div class="a" style="left:1447px;top:900px;width:352px;height:1.3px;background:#111;"></div>
<div class="a" style="left:367.5px;top:440px;width:1.2px;height:461px;background:#111;"></div>
<div class="a" style="left:716.5px;top:440px;width:1.2px;height:461px;background:#111;"></div>
<div class="a" style="left:837.5px;top:440px;width:1.2px;height:461px;background:#111;"></div>
<div class="a" style="left:955.5px;top:440px;width:1.2px;height:461px;background:#111;"></div>
<div class="a" style="left:1073.5px;top:440px;width:1.2px;height:461px;background:#111;"></div>
<div class="a" style="left:1189.5px;top:440px;width:1.2px;height:461px;background:#111;"></div>
<div class="a" style="left:1328.5px;top:440px;width:1.2px;height:461px;background:#111;"></div>
<div class="a" style="left:1446.5px;top:440px;width:1.2px;height:461px;background:#111;"></div>
<div class="a" style="left:1564.5px;top:440px;width:1.2px;height:461px;background:#111;"></div>
<div class="a" style="left:1680.5px;top:440px;width:1.2px;height:461px;background:#111;"></div>
<div class="a" style="left:1798.5px;top:440px;width:1.2px;height:461px;background:#111;"></div>
<div class="a" style="left:227px;top:440px;width:1.2px;height:82px;background:#111;"></div>
<div class="a" style="left:228px;top:522px;width:140px;height:27px;overflow:hidden"><div class="t" style="left:3.80px;top:5.6px;font-size:19.5px;color:#000;font-weight:700;transform:scaleX(0.8965);transform-origin:0 0;">ALTA DIRECCIóN</div></div>
<div class="t d" style="left:373.20px;top:528.0px;font-size:17px;color:#111;font-weight:400;transform:scaleX(0.9064);transform-origin:0 0;">BMM, AGENTE DE SEGUROS</div>
<div class="t d" style="left:727.50px;top:528.0px;font-size:17px;color:#111;font-weight:400;transform:scaleX(1.0536);transform-origin:0 0;">$</div>
<div class="t d" style="left:748.55px;top:528.0px;font-size:17px;color:#111;font-weight:400;transform:scaleX(1.0536);transform-origin:0 0;">90,000.00</div>
<div class="t d" style="left:849.50px;top:528.0px;font-size:17px;color:#111;font-weight:400;transform:scaleX(1.0536);transform-origin:0 0;">$</div>
<div class="t d" style="left:876.65px;top:528.0px;font-size:17px;color:#111;font-weight:400;transform:scaleX(1.0536);transform-origin:0 0;">5,400.00</div>
<div class="t d" style="left:1004.42px;top:528.0px;font-size:17px;color:#111;font-weight:400;transform:scaleX(0.9412);transform-origin:0 0;">6%</div>
<div class="t d" style="left:1078.90px;top:528.0px;font-size:17px;color:#111;font-weight:400;transform:scaleX(0.9421);transform-origin:0 0;">Galicia Paola</div>
<div class="t d" style="left:1243.80px;top:528.0px;font-size:17px;color:#111;font-weight:400;transform:scaleX(0.9412);transform-origin:0 0;">33%</div>
<div class="t d" style="left:1339.00px;top:528.0px;font-size:17px;color:#111;font-weight:400;transform:scaleX(1.0536);transform-origin:0 0;">$</div>
<div class="t d" style="left:1367.35px;top:528.0px;font-size:17px;color:#111;font-weight:400;transform:scaleX(1.0536);transform-origin:0 0;">1,800.00</div>
<div class="a" style="left:228px;top:549px;width:140px;height:27px;overflow:hidden"><div class="t" style="left:3.80px;top:5.6px;font-size:19.5px;color:#000;font-weight:700;transform:scaleX(0.8965);transform-origin:0 0;">ALTA DIRECCIóN</div></div>
<div class="t d" style="left:373.20px;top:555.0px;font-size:17px;color:#111;font-weight:400;transform:scaleX(0.9064);transform-origin:0 0;">BMM, AGENTE DE SEGUROS</div>
<div class="t d" style="left:727.50px;top:555.0px;font-size:17px;color:#111;font-weight:400;transform:scaleX(1.0536);transform-origin:0 0;">$</div>
<div class="t d" style="left:748.55px;top:555.0px;font-size:17px;color:#111;font-weight:400;transform:scaleX(1.0536);transform-origin:0 0;">23,000.00</div>
<div class="t d" style="left:849.50px;top:555.0px;font-size:17px;color:#111;font-weight:400;transform:scaleX(1.0536);transform-origin:0 0;">$</div>
<div class="t d" style="left:876.65px;top:555.0px;font-size:17px;color:#111;font-weight:400;transform:scaleX(1.0536);transform-origin:0 0;">1,380.00</div>
<div class="t d" style="left:1004.42px;top:555.0px;font-size:17px;color:#111;font-weight:400;transform:scaleX(0.9412);transform-origin:0 0;">6%</div>
<div class="t d" style="left:1078.90px;top:555.0px;font-size:17px;color:#111;font-weight:400;transform:scaleX(0.9421);transform-origin:0 0;">Galicia Paola</div>
<div class="t d" style="left:1243.80px;top:555.0px;font-size:17px;color:#111;font-weight:400;transform:scaleX(0.9412);transform-origin:0 0;">33%</div>
<div class="t d" style="left:1339.00px;top:555.0px;font-size:17px;color:#111;font-weight:400;transform:scaleX(1.0536);transform-origin:0 0;">$</div>
<div class="t d" style="left:1382.31px;top:555.0px;font-size:17px;color:#111;font-weight:400;transform:scaleX(1.0536);transform-origin:0 0;">460.00</div>
<div class="a" style="left:228px;top:576px;width:140px;height:27px;overflow:hidden"><div class="t" style="left:3.80px;top:5.6px;font-size:19.5px;color:#000;font-weight:700;transform:scaleX(0.8965);transform-origin:0 0;">ALTA DIRECCIóN</div></div>
<div class="t d" style="left:373.20px;top:582.0px;font-size:17px;color:#111;font-weight:400;transform:scaleX(0.8887);transform-origin:0 0;">CH SMART TECH PRODUCTS</div>
<div class="t d" style="left:728.64px;top:582.0px;font-size:17px;color:#111;font-weight:400;transform:scaleX(1.0536);transform-origin:0 0;">$200,000.00</div>
<div class="t d" style="left:849.50px;top:582.0px;font-size:17px;color:#111;font-weight:400;transform:scaleX(1.0536);transform-origin:0 0;">$</div>
<div class="t d" style="left:866.75px;top:582.0px;font-size:17px;color:#111;font-weight:400;transform:scaleX(1.0536);transform-origin:0 0;">12,000.00</div>
<div class="t d" style="left:1004.42px;top:582.0px;font-size:17px;color:#111;font-weight:400;transform:scaleX(0.9412);transform-origin:0 0;">6%</div>
<div class="t d" style="left:1078.90px;top:582.0px;font-size:17px;color:#111;font-weight:400;transform:scaleX(0.9421);transform-origin:0 0;">Galicia Paola</div>
<div class="t d" style="left:1243.80px;top:582.0px;font-size:17px;color:#111;font-weight:400;transform:scaleX(0.9412);transform-origin:0 0;">33%</div>
<div class="t d" style="left:1339.00px;top:582.0px;font-size:17px;color:#111;font-weight:400;transform:scaleX(1.0536);transform-origin:0 0;">$</div>
<div class="t d" style="left:1367.35px;top:582.0px;font-size:17px;color:#111;font-weight:400;transform:scaleX(1.0536);transform-origin:0 0;">4,000.00</div>
<div class="a" style="left:228px;top:603px;width:140px;height:27px;overflow:hidden"><div class="t" style="left:3.80px;top:5.6px;font-size:19.5px;color:#000;font-weight:700;transform:scaleX(0.8965);transform-origin:0 0;">ALTA DIRECCIóN</div></div>
<div class="t d" style="left:373.20px;top:609.0px;font-size:17px;color:#111;font-weight:400;transform:scaleX(0.9232);transform-origin:0 0;">ORGANIZACION DE SERVICIOS DE LIMPIEZA</div>
<div class="t d" style="left:728.64px;top:609.0px;font-size:17px;color:#111;font-weight:400;transform:scaleX(1.0536);transform-origin:0 0;">$459,000.00</div>
<div class="t d" style="left:849.50px;top:609.0px;font-size:17px;color:#111;font-weight:400;transform:scaleX(1.0536);transform-origin:0 0;">$</div>
<div class="t d" style="left:866.75px;top:609.0px;font-size:17px;color:#111;font-weight:400;transform:scaleX(1.0536);transform-origin:0 0;">27,540.00</div>
<div class="t d" style="left:1004.42px;top:609.0px;font-size:17px;color:#111;font-weight:400;transform:scaleX(0.9412);transform-origin:0 0;">6%</div>
<div class="t d" style="left:1078.90px;top:609.0px;font-size:17px;color:#111;font-weight:400;transform:scaleX(0.9421);transform-origin:0 0;">Galicia Paola</div>
<div class="t d" style="left:1243.80px;top:609.0px;font-size:17px;color:#111;font-weight:400;transform:scaleX(0.9412);transform-origin:0 0;">33%</div>
<div class="t d" style="left:1339.00px;top:609.0px;font-size:17px;color:#111;font-weight:400;transform:scaleX(1.0536);transform-origin:0 0;">$</div>
<div class="t d" style="left:1367.35px;top:609.0px;font-size:17px;color:#111;font-weight:400;transform:scaleX(1.0536);transform-origin:0 0;">9,180.00</div>
<div class="a" style="left:228px;top:630px;width:140px;height:27px;overflow:hidden"><div class="t" style="left:3.80px;top:5.6px;font-size:19.5px;color:#000;font-weight:700;transform:scaleX(0.8965);transform-origin:0 0;">ALTA DIRECCIóN</div></div>
<div class="t d" style="left:373.20px;top:636.0px;font-size:17px;color:#111;font-weight:400;transform:scaleX(0.9309);transform-origin:0 0;">PRO INSUMOS DE SALUD COLIMA</div>
<div class="t d" style="left:728.64px;top:636.0px;font-size:17px;color:#111;font-weight:400;transform:scaleX(1.0536);transform-origin:0 0;">$522,078.59</div>
<div class="t d" style="left:849.50px;top:636.0px;font-size:17px;color:#111;font-weight:400;transform:scaleX(1.0536);transform-origin:0 0;">$</div>
<div class="t d" style="left:866.75px;top:636.0px;font-size:17px;color:#111;font-weight:400;transform:scaleX(1.0536);transform-origin:0 0;">31,759.74</div>
<div class="t d" style="left:1004.42px;top:636.0px;font-size:17px;color:#111;font-weight:400;transform:scaleX(0.9412);transform-origin:0 0;">6%</div>
<div class="t d" style="left:1078.70px;top:634.8px;font-size:19px;color:#111;font-weight:400;transform:scaleX(0.9580);transform-origin:0 0;">Galicia Paola</div>
<div class="t d" style="left:1243.00px;top:634.8px;font-size:19px;color:#111;font-weight:400;transform:scaleX(0.9263);transform-origin:0 0;">33%</div>
<div class="t d" style="left:1339.00px;top:636.0px;font-size:17px;color:#111;font-weight:400;transform:scaleX(1.0536);transform-origin:0 0;">$</div>
<div class="t d" style="left:1357.45px;top:636.0px;font-size:17px;color:#111;font-weight:400;transform:scaleX(1.0536);transform-origin:0 0;">10,586.58</div>
<div class="a" style="left:228px;top:657px;width:140px;height:27px;overflow:hidden"><div class="t" style="left:3.80px;top:5.6px;font-size:19.5px;color:#000;font-weight:700;transform:scaleX(0.9551);transform-origin:0 0;">NOM035</div></div>
<div class="t d" style="left:377.00px;top:663.0px;font-size:17px;color:#111;font-weight:400;transform:scaleX(0.9323);transform-origin:0 0;">PRO INSUMOS DE SALUD COLIMA</div>
<div class="t d" style="left:728.64px;top:663.0px;font-size:17px;color:#111;font-weight:400;transform:scaleX(1.0536);transform-origin:0 0;">$703,980.94</div>
<div class="t d" style="left:849.50px;top:663.0px;font-size:17px;color:#111;font-weight:400;transform:scaleX(1.0536);transform-origin:0 0;">$</div>
<div class="t d" style="left:866.75px;top:663.0px;font-size:17px;color:#111;font-weight:400;transform:scaleX(1.0536);transform-origin:0 0;">44,606.26</div>
<div class="t d" style="left:1046.65px;top:663.0px;font-size:17px;color:#111;font-weight:400;transform:scaleX(0.9412);transform-origin:0 0;">6%</div>
<div class="t d" style="left:1078.90px;top:663.0px;font-size:17px;color:#111;font-weight:400;transform:scaleX(0.9421);transform-origin:0 0;">Galicia Paola</div>
<div class="t d" style="left:1293.00px;top:663.0px;font-size:17px;color:#111;font-weight:400;transform:scaleX(0.9412);transform-origin:0 0;">33%</div>
<div class="t d" style="left:1339.00px;top:663.0px;font-size:17px;color:#111;font-weight:400;transform:scaleX(1.0536);transform-origin:0 0;">$</div>
<div class="t d" style="left:1357.45px;top:663.0px;font-size:17px;color:#111;font-weight:400;transform:scaleX(1.0536);transform-origin:0 0;">14,868.75</div>
<div class="a" style="left:228px;top:684px;width:140px;height:27px;overflow:hidden"><div class="t" style="left:3.80px;top:5.6px;font-size:19.5px;color:#000;font-weight:700;transform:scaleX(0.9551);transform-origin:0 0;">NOM035</div></div>
<div class="t d" style="left:377.00px;top:690.0px;font-size:17px;color:#111;font-weight:400;transform:scaleX(0.9173);transform-origin:0 0;">RTECH SOLUTIONS LATAM</div>
<div class="t d" style="left:728.64px;top:690.0px;font-size:17px;color:#111;font-weight:400;transform:scaleX(1.0536);transform-origin:0 0;">$374,284.08</div>
<div class="t d" style="left:849.50px;top:690.0px;font-size:17px;color:#111;font-weight:400;transform:scaleX(1.0536);transform-origin:0 0;">$</div>
<div class="t d" style="left:866.75px;top:690.0px;font-size:17px;color:#111;font-weight:400;transform:scaleX(1.0536);transform-origin:0 0;">22,457.04</div>
<div class="t d" style="left:1046.65px;top:690.0px;font-size:17px;color:#111;font-weight:400;transform:scaleX(0.9412);transform-origin:0 0;">6%</div>
<div class="t d" style="left:1078.90px;top:690.0px;font-size:17px;color:#111;font-weight:400;transform:scaleX(0.9421);transform-origin:0 0;">Galicia Paola</div>
<div class="t d" style="left:1293.00px;top:690.0px;font-size:17px;color:#111;font-weight:400;transform:scaleX(0.9412);transform-origin:0 0;">33%</div>
<div class="t d" style="left:1339.00px;top:690.0px;font-size:17px;color:#111;font-weight:400;transform:scaleX(1.0536);transform-origin:0 0;">$</div>
<div class="t d" style="left:1367.35px;top:690.0px;font-size:17px;color:#111;font-weight:400;transform:scaleX(1.0536);transform-origin:0 0;">7,485.68</div>
<div class="a" style="left:228px;top:711px;width:140px;height:27px;overflow:hidden"><div class="t" style="left:3.80px;top:5.6px;font-size:19.5px;color:#000;font-weight:700;transform:scaleX(0.9551);transform-origin:0 0;">NOM035</div></div>
<div class="t d" style="left:377.00px;top:717.0px;font-size:17px;color:#111;font-weight:400;transform:scaleX(0.9077);transform-origin:0 0;">BMM, AGENTE DE SEGUROS</div>
<div class="t d" style="left:727.50px;top:717.0px;font-size:17px;color:#111;font-weight:400;transform:scaleX(1.0536);transform-origin:0 0;">$</div>
<div class="t d" style="left:748.55px;top:717.0px;font-size:17px;color:#111;font-weight:400;transform:scaleX(1.0536);transform-origin:0 0;">76,725.00</div>
<div class="t d" style="left:849.50px;top:717.0px;font-size:17px;color:#111;font-weight:400;transform:scaleX(1.0536);transform-origin:0 0;">$</div>
<div class="t d" style="left:876.65px;top:717.0px;font-size:17px;color:#111;font-weight:400;transform:scaleX(1.0536);transform-origin:0 0;">4,603.50</div>
<div class="t d" style="left:1046.65px;top:717.0px;font-size:17px;color:#111;font-weight:400;transform:scaleX(0.9412);transform-origin:0 0;">6%</div>
<div class="t d" style="left:1078.90px;top:717.0px;font-size:17px;color:#111;font-weight:400;transform:scaleX(0.9421);transform-origin:0 0;">Galicia Paola</div>
<div class="t d" style="left:1293.00px;top:717.0px;font-size:17px;color:#111;font-weight:400;transform:scaleX(0.9412);transform-origin:0 0;">33%</div>
<div class="t d" style="left:1339.00px;top:717.0px;font-size:17px;color:#111;font-weight:400;transform:scaleX(1.0536);transform-origin:0 0;">$</div>
<div class="t d" style="left:1367.35px;top:717.0px;font-size:17px;color:#111;font-weight:400;transform:scaleX(1.0536);transform-origin:0 0;">1,534.50</div>
<div class="a" style="left:228px;top:738px;width:140px;height:27px;overflow:hidden"><div class="t" style="left:3.80px;top:5.6px;font-size:19.5px;color:#000;font-weight:700;transform:scaleX(0.9551);transform-origin:0 0;">NOM035</div></div>
<div class="t d" style="left:377.00px;top:744.0px;font-size:17px;color:#111;font-weight:400;transform:scaleX(0.8906);transform-origin:0 0;">FR AUTOPARTES</div>
<div class="t d" style="left:727.50px;top:744.0px;font-size:17px;color:#111;font-weight:400;transform:scaleX(1.0536);transform-origin:0 0;">$</div>
<div class="t d" style="left:748.55px;top:744.0px;font-size:17px;color:#111;font-weight:400;transform:scaleX(1.0536);transform-origin:0 0;">27,804.79</div>
<div class="t d" style="left:849.50px;top:744.0px;font-size:17px;color:#111;font-weight:400;transform:scaleX(1.0536);transform-origin:0 0;">$</div>
<div class="t d" style="left:876.65px;top:744.0px;font-size:17px;color:#111;font-weight:400;transform:scaleX(1.0536);transform-origin:0 0;">1,668.29</div>
<div class="t d" style="left:1046.65px;top:744.0px;font-size:17px;color:#111;font-weight:400;transform:scaleX(0.9412);transform-origin:0 0;">6%</div>
<div class="t d" style="left:1078.90px;top:744.0px;font-size:17px;color:#111;font-weight:400;transform:scaleX(0.9421);transform-origin:0 0;">Galicia Paola</div>
<div class="t d" style="left:1293.00px;top:744.0px;font-size:17px;color:#111;font-weight:400;transform:scaleX(0.9412);transform-origin:0 0;">33%</div>
<div class="t d" style="left:1339.00px;top:744.0px;font-size:17px;color:#111;font-weight:400;transform:scaleX(1.0536);transform-origin:0 0;">$</div>
<div class="t d" style="left:1382.31px;top:744.0px;font-size:17px;color:#111;font-weight:400;transform:scaleX(1.0536);transform-origin:0 0;">556.10</div>
<div class="a" style="left:228px;top:765px;width:140px;height:27px;overflow:hidden"><div class="t" style="left:3.80px;top:5.6px;font-size:19.5px;color:#000;font-weight:700;transform:scaleX(0.9551);transform-origin:0 0;">NOM035</div></div>
<div class="t d" style="left:377.00px;top:771.0px;font-size:17px;color:#111;font-weight:400;transform:scaleX(0.9236);transform-origin:0 0;">MK PLANEACION Y DISEÑO</div>
<div class="t d" style="left:727.50px;top:771.0px;font-size:17px;color:#111;font-weight:400;transform:scaleX(1.0536);transform-origin:0 0;">$</div>
<div class="t d" style="left:748.55px;top:771.0px;font-size:17px;color:#111;font-weight:400;transform:scaleX(1.0536);transform-origin:0 0;">58,280.80</div>
<div class="t d" style="left:849.50px;top:771.0px;font-size:17px;color:#111;font-weight:400;transform:scaleX(1.0536);transform-origin:0 0;">$</div>
<div class="t d" style="left:876.65px;top:771.0px;font-size:17px;color:#111;font-weight:400;transform:scaleX(1.0536);transform-origin:0 0;">3,496.84</div>
<div class="t d" style="left:1046.65px;top:771.0px;font-size:17px;color:#111;font-weight:400;transform:scaleX(0.9412);transform-origin:0 0;">6%</div>
<div class="t d" style="left:1078.90px;top:771.0px;font-size:17px;color:#111;font-weight:400;transform:scaleX(0.9421);transform-origin:0 0;">Galicia Paola</div>
<div class="t d" style="left:1293.00px;top:771.0px;font-size:17px;color:#111;font-weight:400;transform:scaleX(0.9412);transform-origin:0 0;">33%</div>
<div class="t d" style="left:1339.00px;top:771.0px;font-size:17px;color:#111;font-weight:400;transform:scaleX(1.0536);transform-origin:0 0;">$</div>
<div class="t d" style="left:1367.35px;top:771.0px;font-size:17px;color:#111;font-weight:400;transform:scaleX(1.0536);transform-origin:0 0;">1,165.61</div>
<div class="a" style="left:228px;top:792px;width:140px;height:27px;overflow:hidden"><div class="t" style="left:3.80px;top:5.6px;font-size:19.5px;color:#000;font-weight:700;transform:scaleX(0.9551);transform-origin:0 0;">NOM035</div></div>
<div class="t d" style="left:377.00px;top:798.0px;font-size:17px;color:#111;font-weight:400;transform:scaleX(0.9415);transform-origin:0 0;">VIVE COLIVING</div>
<div class="t d" style="left:728.64px;top:798.0px;font-size:17px;color:#111;font-weight:400;transform:scaleX(1.0536);transform-origin:0 0;">$175,749.28</div>
<div class="t d" style="left:849.50px;top:798.0px;font-size:17px;color:#111;font-weight:400;transform:scaleX(1.0536);transform-origin:0 0;">$</div>
<div class="t d" style="left:876.65px;top:798.0px;font-size:17px;color:#111;font-weight:400;transform:scaleX(1.0536);transform-origin:0 0;">8,787.46</div>
<div class="t d" style="left:1046.65px;top:798.0px;font-size:17px;color:#111;font-weight:400;transform:scaleX(0.9412);transform-origin:0 0;">5%</div>
<div class="t d" style="left:1078.90px;top:798.0px;font-size:17px;color:#111;font-weight:400;transform:scaleX(0.9421);transform-origin:0 0;">Galicia Paola</div>
<div class="t d" style="left:1293.00px;top:798.0px;font-size:17px;color:#111;font-weight:400;transform:scaleX(0.9412);transform-origin:0 0;">30%</div>
<div class="t d" style="left:1339.00px;top:798.0px;font-size:17px;color:#111;font-weight:400;transform:scaleX(1.0536);transform-origin:0 0;">$</div>
<div class="t d" style="left:1367.35px;top:798.0px;font-size:17px;color:#111;font-weight:400;transform:scaleX(1.0536);transform-origin:0 0;">2,636.24</div>
<div class="a" style="left:228px;top:819px;width:140px;height:27px;overflow:hidden"><div class="t" style="left:3.80px;top:5.6px;font-size:19.5px;color:#000;font-weight:700;transform:scaleX(0.9551);transform-origin:0 0;">NOM035</div></div>
<div class="t d" style="left:377.00px;top:825.0px;font-size:17px;color:#111;font-weight:400;transform:scaleX(0.9505);transform-origin:0 0;">COLON590</div>
<div class="t d" style="left:727.50px;top:825.0px;font-size:17px;color:#111;font-weight:400;transform:scaleX(1.0536);transform-origin:0 0;">$</div>
<div class="t d" style="left:748.55px;top:825.0px;font-size:17px;color:#111;font-weight:400;transform:scaleX(1.0536);transform-origin:0 0;">96,893.09</div>
<div class="t d" style="left:849.50px;top:825.0px;font-size:17px;color:#111;font-weight:400;transform:scaleX(1.0536);transform-origin:0 0;">$</div>
<div class="t d" style="left:876.65px;top:825.0px;font-size:17px;color:#111;font-weight:400;transform:scaleX(1.0536);transform-origin:0 0;">4,844.65</div>
<div class="t d" style="left:1046.65px;top:825.0px;font-size:17px;color:#111;font-weight:400;transform:scaleX(0.9412);transform-origin:0 0;">5%</div>
<div class="t d" style="left:1078.90px;top:825.0px;font-size:17px;color:#111;font-weight:400;transform:scaleX(0.9421);transform-origin:0 0;">Galicia Paola</div>
<div class="t d" style="left:1293.00px;top:825.0px;font-size:17px;color:#111;font-weight:400;transform:scaleX(0.9412);transform-origin:0 0;">30%</div>
<div class="t d" style="left:1339.00px;top:825.0px;font-size:17px;color:#111;font-weight:400;transform:scaleX(1.0536);transform-origin:0 0;">$</div>
<div class="t d" style="left:1367.35px;top:825.0px;font-size:17px;color:#111;font-weight:400;transform:scaleX(1.0536);transform-origin:0 0;">1,453.40</div>
<div class="a" style="left:228px;top:846px;width:140px;height:28px;overflow:hidden"><div class="t" style="left:3.80px;top:5.6px;font-size:19.5px;color:#000;font-weight:700;transform:scaleX(0.9551);transform-origin:0 0;">NOM035</div></div>
<div class="t d" style="left:377.00px;top:853.0px;font-size:17px;color:#111;font-weight:400;transform:scaleX(0.8932);transform-origin:0 0;">SERVICIOS INTEGRALES HYDROAGRICOLAS</div>
<div class="t d" style="left:727.50px;top:853.0px;font-size:17px;color:#111;font-weight:400;transform:scaleX(1.0536);transform-origin:0 0;">$</div>
<div class="t d" style="left:748.55px;top:853.0px;font-size:17px;color:#111;font-weight:400;transform:scaleX(1.0536);transform-origin:0 0;">66,246.70</div>
<div class="t d" style="left:849.50px;top:853.0px;font-size:17px;color:#111;font-weight:400;transform:scaleX(1.0536);transform-origin:0 0;">$</div>
<div class="t d" style="left:876.65px;top:853.0px;font-size:17px;color:#111;font-weight:400;transform:scaleX(1.0536);transform-origin:0 0;">4,637.27</div>
<div class="t d" style="left:1046.65px;top:853.0px;font-size:17px;color:#111;font-weight:400;transform:scaleX(0.9412);transform-origin:0 0;">7%</div>
<div class="t d" style="left:1078.90px;top:853.0px;font-size:17px;color:#111;font-weight:400;transform:scaleX(0.9421);transform-origin:0 0;">Galicia Paola</div>
<div class="t d" style="left:1293.00px;top:853.0px;font-size:17px;color:#111;font-weight:400;transform:scaleX(0.9412);transform-origin:0 0;">43%</div>
<div class="t d" style="left:1339.00px;top:853.0px;font-size:17px;color:#111;font-weight:400;transform:scaleX(1.0536);transform-origin:0 0;">$</div>
<div class="t d" style="left:1367.35px;top:853.0px;font-size:17px;color:#111;font-weight:400;transform:scaleX(1.0536);transform-origin:0 0;">1,987.40</div>
<div class="a" style="left:228px;top:874px;width:140px;height:27px;overflow:hidden"><div class="t" style="left:3.80px;top:5.6px;font-size:19.5px;color:#000;font-weight:700;transform:scaleX(0.9551);transform-origin:0 0;">NOM035</div></div>
<div class="t d" style="left:377.00px;top:880.0px;font-size:17px;color:#111;font-weight:400;transform:scaleX(0.9341);transform-origin:0 0;">IMPULSORA DE LAVANDERIAS</div>
<div class="t d" style="left:728.64px;top:880.0px;font-size:17px;color:#111;font-weight:400;transform:scaleX(1.0536);transform-origin:0 0;">$221,764.60</div>
<div class="t d" style="left:849.50px;top:880.0px;font-size:17px;color:#111;font-weight:400;transform:scaleX(1.0536);transform-origin:0 0;">$</div>
<div class="t d" style="left:866.75px;top:880.0px;font-size:17px;color:#111;font-weight:400;transform:scaleX(1.0536);transform-origin:0 0;">13,305.88</div>
<div class="t d" style="left:1046.65px;top:880.0px;font-size:17px;color:#111;font-weight:400;transform:scaleX(0.9412);transform-origin:0 0;">6%</div>
<div class="t d" style="left:1078.90px;top:880.0px;font-size:17px;color:#111;font-weight:400;transform:scaleX(0.9421);transform-origin:0 0;">Galicia Paola</div>
<div class="t d" style="left:1293.00px;top:880.0px;font-size:17px;color:#111;font-weight:400;transform:scaleX(0.9412);transform-origin:0 0;">33%</div>
<div class="t d" style="left:1339.00px;top:880.0px;font-size:17px;color:#111;font-weight:400;transform:scaleX(1.0536);transform-origin:0 0;">$</div>
<div class="t d" style="left:1367.35px;top:880.0px;font-size:17px;color:#111;font-weight:400;transform:scaleX(1.0536);transform-origin:0 0;">4,435.29</div>
<div class="t" style="left:1457.20px;top:527.3px;font-size:18px;color:#1414e6;font-weight:700;transform:scaleX(1.1509);transform-origin:0 0;">17/10/2025</div>
<div class="t" style="left:1569.70px;top:528.1px;font-size:17px;color:#111;font-weight:400;transform:scaleX(1.1340);transform-origin:0 0;">octubre</div>
<div class="t" style="left:1686.00px;top:528.1px;font-size:17px;color:#111;font-weight:400;transform:scaleX(1.1058);transform-origin:0 0;">2025</div>
<div class="a" style="left:226.2px;top:521px;width:2.4px;height:381px;background:#1e6b41;"></div>
<div class="a" style="left:226.2px;top:521px;width:1222px;height:2.2px;background:#1e6b41;"></div>
<div class="a" style="left:1446.2px;top:521px;width:2.2px;height:381px;background:#1e6b41;"></div>
<div class="a" style="left:226.2px;top:899.6px;width:1222px;height:2.2px;background:#1e6b41;"></div>
<div class="a" style="left:1444px;top:897.5px;width:6px;height:6px;background:#1e6b41;border:1px solid #fff"></div>
<svg class="a" style="left:1792px;top:893px;" width="7" height="7" viewBox="0 0 7 7"><path d="M7 0 V7 H0 Z" fill="#5b4fa0"/></svg>
<div class="a" style="left:1807.5px;top:452px;width:120px;height:466px;background:#fff;border:1px solid #c9c9c9"></div>
<div class="t" style="left:1820.80px;top:463.4px;font-size:17px;color:#1f1f1f;font-weight:400;transform:scaleX(1.1000);transform-origin:0 0;">Este repo</div>
<div class="t" style="left:1820.80px;top:487.7px;font-size:17px;color:#1f1f1f;font-weight:400;transform:scaleX(1.1000);transform-origin:0 0;">directam</div>
<div class="t" style="left:1820.80px;top:512.6px;font-size:17px;color:#1f1f1f;font-weight:400;transform:scaleX(1.1000);transform-origin:0 0;">Generaln</div>
<div class="t" style="left:1820.80px;top:538.0px;font-size:17px;color:#1f1f1f;font-weight:400;transform:scaleX(1.1000);transform-origin:0 0;">dividido p</div>
<div class="t" style="left:1820.80px;top:562.8px;font-size:17px;color:#1f1f1f;font-weight:400;transform:scaleX(1.1000);transform-origin:0 0;">que debe</div>
<div class="t" style="left:1820.80px;top:588.0px;font-size:17px;color:#1f1f1f;font-weight:400;transform:scaleX(1.1000);transform-origin:0 0;">sola tabla</div>
<div class="t" style="left:1820.80px;top:612.9px;font-size:17px;color:#1f1f1f;font-weight:400;transform:scaleX(1.1000);transform-origin:0 0;">la fecha r</div>
<div class="t" style="left:1820.80px;top:638.1px;font-size:17px;color:#1f1f1f;font-weight:400;transform:scaleX(1.1000);transform-origin:0 0;">poder ide</div>
<div class="t" style="left:1820.80px;top:662.7px;font-size:17px;color:#1f1f1f;font-weight:400;transform:scaleX(1.1000);transform-origin:0 0;">año se re</div>
<div class="t" style="left:1820.80px;top:713.1px;font-size:17px;color:#1f1f1f;font-weight:400;transform:scaleX(1.1000);transform-origin:0 0;">El propós</div>
<div class="t" style="left:1820.80px;top:738.1px;font-size:17px;color:#1f1f1f;font-weight:400;transform:scaleX(1.1000);transform-origin:0 0;">verificar c</div>
<div class="t" style="left:1820.80px;top:763.1px;font-size:17px;color:#1f1f1f;font-weight:400;transform:scaleX(1.1000);transform-origin:0 0;">dispersar</div>
<div class="t" style="left:1820.80px;top:788.1px;font-size:17px;color:#1f1f1f;font-weight:400;transform:scaleX(1.1000);transform-origin:0 0;">durante c</div>
<div class="t" style="left:1820.80px;top:812.6px;font-size:17px;color:#1f1f1f;font-weight:400;transform:scaleX(1.1000);transform-origin:0 0;">que el niv</div>
<div class="t" style="left:1820.80px;top:837.6px;font-size:17px;color:#1f1f1f;font-weight:400;transform:scaleX(1.1000);transform-origin:0 0;">aplicado</div>
<div class="t" style="left:1820.80px;top:863.1px;font-size:17px;color:#1f1f1f;font-weight:400;transform:scaleX(1.1000);transform-origin:0 0;">pactado</div>
<svg class="a" style="left:886px;top:625px;" width="21" height="21" viewBox="0 0 21 21"><path d="M6.5 .5 H14.5 V6.5 H20.5 V14.5 H14.5 V20.5 H6.5 V14.5 H.5 V6.5 H6.5 Z" fill="#fff" stroke="#000" stroke-width="1.2"/></svg>
<div class="a" style="left:1894px;top:390px;width:26px;height:563px;background:#ebebf0;"></div>
<div class="a" style="left:1898px;top:390px;width:19px;height:562px;background:#f4f4f6;border-radius:9px"></div>
<svg class="a" style="left:1902px;top:396px;" width="11" height="8" viewBox="0 0 11 8"><path d="M5.5 0 L11 8 H0 Z" fill="#777"/></svg>
<div class="a" style="left:1903px;top:513px;width:10px;height:305px;background:#7a7a7a;border-radius:5px"></div>
<svg class="a" style="left:1902px;top:941px;" width="11" height="8" viewBox="0 0 11 8"><path d="M0 0 H11 L5.5 8 Z" fill="#777"/></svg>
<div class="a" style="left:0px;top:953px;width:1920px;height:40px;background:#ebebf0;"></div>
<div class="a" style="left:0px;top:953px;width:141px;height:40px;background:#ebebf0;border-top-right-radius:8px"></div>
<div class="a" style="left:141px;top:953px;width:84px;height:35px;background:#ffffff;border-bottom-left-radius:6px;border-bottom-right-radius:6px"></div>
<svg class="a" style="left:31px;top:966px;" width="10" height="12" viewBox="0 0 10 12"><path d="M8.5 .5 L2 6 L8.5 11.5" fill="none" stroke="#8a8a8a" stroke-width="1.3"/></svg>
<svg class="a" style="left:72px;top:966px;" width="10" height="12" viewBox="0 0 10 12"><path d="M1.5 .5 L8 6 L1.5 11.5" fill="none" stroke="#8a8a8a" stroke-width="1.3"/></svg>
<div class="t" style="left:151.60px;top:961.6px;font-size:16.5px;color:#1f1f1f;font-weight:700;transform:scaleX(0.9770);transform-origin:0 0;">Settings</div>
<div class="a" style="left:151px;top:982.3px;width:64px;height:2.4px;background:#1e6b41;border-radius:1px"></div>
<div class="a" style="left:230px;top:962px;width:1px;height:19px;background:#cfcfcf;"></div>
<div class="a" style="left:335px;top:962px;width:1px;height:19px;background:#cfcfcf;"></div>
<div class="a" style="left:450px;top:962px;width:1px;height:19px;background:#cfcfcf;"></div>
<div class="t" style="left:247.90px;top:966.0px;font-size:16.5px;color:#333;font-weight:400;transform:scaleX(1.0480);transform-origin:0 0;">Comisión</div>
<div class="t" style="left:354.30px;top:966.0px;font-size:16.5px;color:#333;font-weight:400;transform:scaleX(1.0372);transform-origin:0 0;">Dispersión</div>
<svg class="a" style="left:503px;top:965px;" width="15" height="14" viewBox="0 0 15 14"><path d="M7.5 0 V14 M0 7 H15" stroke="#333" stroke-width="1.4"/></svg>
<div class="a" style="left:1357px;top:961px;width:539px;height:22px;background:#f6f6f6;border-radius:6px"></div>
<div class="a" style="left:1668px;top:967px;width:197px;height:11px;background:#777;border-radius:6px"></div>
<svg class="a" style="left:1882px;top:968px;" width="9" height="10" viewBox="0 0 9 10"><path d="M0 0 L9 5 L0 10 Z" fill="#777"/></svg>
<div class="a" style="left:0px;top:993px;width:1920px;height:27px;background:#f3f3f3;border-top:1px solid #d4d4d4"></div>
<div class="t" style="left:14.00px;top:1001.1px;font-size:13.5px;color:#262626;font-weight:400;transform:scaleX(0.9512);transform-origin:0 0;">Seleccione el destino y presione ENTRAR o elija Pegar</div>
<div class="t" style="left:956.70px;top:1001.6px;font-size:13.5px;color:#262626;font-weight:400;transform:scaleX(0.8904);transform-origin:0 0;">Promedio: 477778.9395</div>
<div class="t" style="left:1106.70px;top:1001.6px;font-size:13.5px;color:#262626;font-weight:400;transform:scaleX(0.9401);transform-origin:0 0;">Recuento: 112</div>
<div class="t" style="left:1209.00px;top:1001.6px;font-size:13.5px;color:#262626;font-weight:400;transform:scaleX(0.9236);transform-origin:0 0;">Mín: 0.05</div>
<div class="t" style="left:1284.00px;top:1001.6px;font-size:13.5px;color:#262626;font-weight:400;transform:scaleX(0.9329);transform-origin:0 0;">Máx: 703980.9396</div>
<div class="t" style="left:1410.00px;top:1001.6px;font-size:13.5px;color:#262626;font-weight:400;transform:scaleX(0.9153);transform-origin:0 0;">Suma: 3344449.885</div>
<div class="a" style="left:1547px;top:994px;width:50px;height:26px;background:#e2e2e2;"></div>
<svg class="a" style="left:1563px;top:998px;" width="17" height="16" viewBox="0 0 17 16"><rect x=".7" y=".7" width="15.6" height="14.6" fill="none" stroke="#444" stroke-width="1.3"/><path d="M.7 5.5 H16.3 M.7 10.3 H16.3 M5.9 .7 V15.3 M11.1 .7 V15.3" stroke="#444" stroke-width="1.2"/></svg>
<svg class="a" style="left:1613px;top:998px;" width="18" height="16" viewBox="0 0 18 16"><rect x=".7" y=".7" width="16.6" height="14.6" fill="none" stroke="#444" stroke-width="1.3"/><rect x="3.5" y="3.5" width="11" height="9" fill="none" stroke="#444" stroke-width="1.1"/><path d="M6 6.5 H12 M6 9.2 H12" stroke="#444" stroke-width="1"/></svg>
<svg class="a" style="left:1663px;top:998px;" width="18" height="16" viewBox="0 0 18 16"><rect x=".7" y=".7" width="16.6" height="14.6" fill="none" stroke="#444" stroke-width="1.3"/><path d="M6 .7 V8 H12 V.7 M.7 11 H17.3" fill="none" stroke="#444" stroke-width="1.2"/></svg>
<div class="a" style="left:1704px;top:1006px;width:10px;height:1.3px;background:#444;"></div>
<div class="a" style="left:1720px;top:1006.5px;width:125px;height:1px;background:#8a8a8a;"></div>
<div class="a" style="left:1782px;top:1001px;width:6px;height:13px;background:#555;border-radius:1px"></div>
<svg class="a" style="left:1850px;top:1001px;" width="11" height="11" viewBox="0 0 11 11"><path d="M5.5 0 V11 M0 5.5 H11" stroke="#444" stroke-width="1.3"/></svg>
<div class="t" style="left:1877.80px;top:1001.6px;font-size:13.5px;color:#262626;font-weight:400;transform:scaleX(0.9015);transform-origin:0 0;">112%</div>
<div class="a" style="left:565px;top:947.5px;width:792px;height:61px;background:#242424;box-shadow:0 2px 4px rgba(0,0,0,.35)"></div>
<div class="a" style="left:578px;top:972.5px;width:3px;height:13px;background:#d8d8d8;"></div>
<div class="a" style="left:583px;top:972.5px;width:3px;height:13px;background:#d8d8d8;"></div>
<div class="t" style="left:599.20px;top:972.0px;font-size:15px;color:#f2f2f2;font-weight:400;transform:scaleX(0.9871);transform-origin:0 0;">Trupeer – Graba, edita y traduce al instante está compartiendo tu pantalla.</div>
<div class="a" style="left:1101px;top:955px;width:180px;height:48px;background:#a8c7fa;border-radius:24px"></div>
<div class="t" style="left:1121.70px;top:971.6px;font-size:15.5px;color:#0b3f91;font-weight:700;transform:scaleX(1.0073);transform-origin:0 0;">Dejar de compartir</div>
<div class="t" style="left:1293.30px;top:972.0px;font-size:15px;color:#a8c7fa;font-weight:400;transform:scaleX(1.0021);transform-origin:0 0;">Ocultar</div>
<div class="a" style="left:1293px;top:986.3px;width:49px;height:1.2px;background:#a8c7fa;"></div>
<div class="a" style="left:0px;top:1020px;width:1920px;height:60px;background:#2d1a4f;border-top:1px solid #3d2c5e"></div>
<div class="a" style="left:27.5px;top:1036px;width:25px;height:25px;border-radius:50%;background:linear-gradient(135deg,#f5c230,#f28a1a 60%,#ee6a12)"></div>
<div class="t" style="left:64.50px;top:1032.6px;font-size:14px;color:#ffffff;font-weight:700;transform:scaleX(0.9345);transform-origin:0 0;">14°C</div>
<div class="t" style="left:64.50px;top:1052.6px;font-size:14px;color:#d9d0ea;font-weight:400;transform:scaleX(1.0554);transform-origin:0 0;">Soleado</div>
<svg class="a" style="left:585px;top:1036px;" width="29" height="29" viewBox="0 0 29 29"><defs><linearGradient id="wg" x1="0" y1="0" x2="1" y2="1"><stop offset="0" stop-color="#6fd3ff"/><stop offset="1" stop-color="#1a8fe8"/></linearGradient></defs><rect x="0" y="0" width="13.5" height="13.5" rx="1" fill="url(#wg)"/><rect x="15.5" y="0" width="13.5" height="13.5" rx="1" fill="url(#wg)"/><rect x="0" y="15.5" width="13.5" height="13.5" rx="1" fill="url(#wg)"/><rect x="15.5" y="15.5" width="13.5" height="13.5" rx="1" fill="url(#wg)"/></svg>
<div class="a" style="left:631px;top:1030px;width:275px;height:40px;background:#4a3770;border-radius:20px"></div>
<svg class="a" style="left:646px;top:1042px;" width="18" height="17" viewBox="0 0 18 17"><circle cx="7" cy="7" r="5.8" fill="none" stroke="#ece6f5" stroke-width="1.8"/><path d="M11.2 11.2 L16.5 16.5" stroke="#ece6f5" stroke-width="2"/></svg>
<div class="t" style="left:677.50px;top:1042.6px;font-size:17px;color:#e3dcf0;font-weight:400;transform:scaleX(0.9452);transform-origin:0 0;">Buscar</div>
<svg class="a" style="left:921px;top:1036px;" width="31" height="28" viewBox="0 0 31 28"><rect x="0" y="10" width="22" height="18" rx="2" fill="#6b6b6b"/><rect x="8" y="0" width="23" height="19" rx="2" fill="#e8e8e8"/><rect x="8" y="10" width="14" height="9" fill="#a9a9a9"/></svg>
<svg class="a" style="left:975px;top:1037px;" width="31" height="27" viewBox="0 0 31 27"><path d="M1 2 Q1 0 3 0 H11 L14 3 H29 Q31 3 31 5 V25 Q31 27 29 27 H3 Q1 27 1 25 Z" fill="#f7c948"/><path d="M1 6 H31 V25 Q31 27 29 27 H3 Q1 27 1 25 Z" fill="#ffd65c"/><rect x="8" y="19" width="16" height="8" rx="2" fill="#1f7fd6"/><rect x="8" y="19" width="16" height="3" fill="#58b0f0"/></svg>
<div class="a" style="left:987.5px;top:1071px;width:8px;height:2.5px;background:#9a8fb0;border-radius:2px"></div>
<svg class="a" style="left:1031px;top:1035px;" width="32" height="30" viewBox="0 0 32 30"><path d="M15 2 C7 2 1.5 8 1.5 15 C1.5 18 2.5 20.5 4 22.5 L2 28.5 L8.5 26.5 C10.5 27.8 12.7 28.5 15 28.5 C22.5 28.5 28.5 22.5 28.5 15 C28.5 8 22.5 2 15 2 Z" fill="none" stroke="#25d366" stroke-width="2.6"/><path d="M10 9.5 C9 10.5 9 12.5 10.5 15 C12 17.5 14.5 19.5 17 20.5 C19 21 20.5 20 21 18.5 L18.5 17 L17 18 C15.5 17.5 13 15 12.5 13.5 L13.5 12 L12 9 Z" fill="#25d366"/></svg>
<div class="a" style="left:1046px;top:1026px;width:22px;height:22px;background:#9b9b9b;border-radius:50%;border:1.5px solid #2d1a4f"></div>
<div class="t" style="left:1053.50px;top:1032.0px;font-size:13px;color:#1f1f1f;font-weight:400;transform:scaleX(0.9722);transform-origin:0 0;">1</div>
<div class="a" style="left:1043px;top:1071px;width:8px;height:2.5px;background:#9a8fb0;border-radius:2px"></div>
<svg class="a" style="left:1087px;top:1037px;" width="29" height="26" viewBox="0 0 29 26"><defs><linearGradient id="cpa" x1="0" y1="0" x2="0" y2="1"><stop offset="0" stop-color="#2a9df4"/><stop offset=".5" stop-color="#6fd35a"/><stop offset="1" stop-color="#f7b733"/></linearGradient><linearGradient id="cpb" x1="0" y1="0" x2="0" y2="1"><stop offset="0" stop-color="#7a6cf0"/><stop offset=".5" stop-color="#d86ad6"/><stop offset="1" stop-color="#f58a4a"/></linearGradient></defs><path d="M7 1 H15 Q18 1 17 4 L11 23 Q10 25.5 7 25.5 H3.5 Q0 25.5 .8 22 L4.5 4 Q5 1 7 1 Z" fill="url(#cpa)"/><path d="M14 1.5 H22 Q25.5 1.5 26.5 5 L28.5 21 Q29 25 25 25 H17 Q14 25 15 22 L20 5 Q20.5 3 18 3 H14 Z" fill="url(#cpb)"/></svg>
<svg class="a" style="left:1141px;top:1035px;" width="31" height="31" viewBox="0 0 31 31"><circle cx="15.5" cy="15.5" r="15" fill="#db4437"/><path d="M15.5 15.5 L28.5 8 A15 15 0 0 1 15.5 30.5 Z" fill="#f4c20d"/><path d="M15.5 15.5 L15.5 30.5 A15 15 0 0 1 2.5 8 Z" fill="#0f9d58"/><circle cx="15.5" cy="15.5" r="7" fill="#fff"/><circle cx="15.5" cy="15.5" r="5.5" fill="#4285f4"/></svg>
<div class="a" style="left:1152.5px;top:1071px;width:8px;height:2.5px;background:#9a8fb0;border-radius:2px"></div>
<svg class="a" style="left:1195px;top:1033px;" width="33" height="32" viewBox="0 0 33 32"><circle cx="12" cy="9" r="4.5" fill="#7b83eb"/><rect x="10" y="15" width="20" height="15" rx="6" fill="#7b83eb"/><rect x="1" y="16" width="15" height="14" rx="2" fill="#4b53bc"/><text x="4.5" y="27.5" font-size="11" font-weight="bold" font-family="Liberation Sans" fill="#fff">T</text></svg>
<div class="a" style="left:1212px;top:1028px;width:21px;height:21px;background:#c4312b;border-radius:50%"></div>
<div class="t" style="left:1214.50px;top:1033.4px;font-size:12.5px;color:#ffffff;font-weight:400;transform:scaleX(1.1189);transform-origin:0 0;">9+</div>
<div class="a" style="left:1207px;top:1071px;width:8px;height:2.5px;background:#9a8fb0;border-radius:2px"></div>
<div class="a" style="left:1286px;top:1027px;width:5px;height:47px;background:#35245a;border-radius:0 4px 4px 0"></div>
<div class="a" style="left:1241px;top:1025.5px;width:44px;height:48px;background:#3e2d62;border-radius:5px"></div>
<svg class="a" style="left:1251px;top:1036px;" width="27" height="28" viewBox="0 0 27 28"><rect x="7" y="0" width="20" height="28" rx="3" fill="#21a366"/><rect x="17" y="0" width="10" height="11" rx="2" fill="#33c481"/><rect x="7" y="0" width="10" height="11" rx="2" fill="#5fd68a"/><rect x="7" y="17" width="20" height="11" fill="#107c41"/><rect x="0" y="10" width="14" height="14" rx="2" fill="#185c37"/><text x="3" y="21.5" font-size="11" font-weight="bold" font-family="Liberation Sans" fill="#fff">X</text></svg>
<div class="a" style="left:1256px;top:1071px;width:20px;height:3px;background:#b9aed0;border-radius:2px"></div>
<svg class="a" style="left:1306px;top:1035px;" width="31" height="31" viewBox="0 0 31 31"><defs><linearGradient id="eg" x1="0" y1="1" x2="1" y2="0"><stop offset="0" stop-color="#1565c0"/><stop offset=".55" stop-color="#1ba1e2"/><stop offset="1" stop-color="#5fdc6a"/></linearGradient></defs><circle cx="15.5" cy="15.5" r="15" fill="url(#eg)"/><path d="M2 19 C2 11 9 6 16 6 C23 6 28 11 27 16 C26 20 21 21 18 19 C22 17 21 12 16 12 C10 12 7 17 8.5 22 C10 27 16 29.5 22 28 C19 30 17 30.5 15.5 30.5 C8 30.5 2 25 2 19 Z" fill="#0f5fb0" opacity=".9"/></svg>
<div class="a" style="left:1317px;top:1071px;width:8px;height:2.5px;background:#9a8fb0;border-radius:2px"></div>
<svg class="a" style="left:1546px;top:1046px;" width="14" height="8" viewBox="0 0 14 8"><path d="M1 7 L7 1 L13 7" fill="none" stroke="#fff" stroke-width="1.6"/></svg>
<svg class="a" style="left:1582px;top:1043px;" width="21" height="14" viewBox="0 0 21 14"><path d="M5 13.5 C1.5 13.5 .5 11 1 9 C1.5 7 3.5 6 5 6.5 C6 3 9 1 12 1 C15.5 1 18 3.5 18 7 C20 7.5 20.5 9 20.5 10.5 C20.5 12.5 19 13.5 17 13.5 Z" fill="#d9d2e6"/></svg>
<svg class="a" style="left:1625px;top:1040px;" width="16" height="20" viewBox="0 0 16 20"><rect x="4.5" y=".8" width="7" height="12" rx="3.5" fill="none" stroke="#fff" stroke-width="1.4"/><path d="M1 9 C1 13 4 15.5 8 15.5 C12 15.5 15 13 15 9 M8 15.5 V19.5" fill="none" stroke="#fff" stroke-width="1.4"/></svg>
<div class="t" style="left:1669.00px;top:1034.1px;font-size:14px;color:#ffffff;font-weight:400;transform:scaleX(0.8536);transform-origin:0 0;">ESP</div>
<div class="t" style="left:1667.50px;top:1053.5px;font-size:14px;color:#ffffff;font-weight:400;transform:scaleX(1.0000);transform-origin:0 0;">LAA</div>
<svg class="a" style="left:1718px;top:1042px;" width="21" height="15" viewBox="0 0 21 15"><path d="M1 5.5 C6.5 .5 14.5 .5 20 5.5 M4 8.8 C8 5.3 13 5.3 17 8.8 M7 12 C9 10.2 12 10.2 14 12" fill="none" stroke="#fff" stroke-width="1.7"/><circle cx="10.5" cy="14" r="1.4" fill="#fff"/></svg>
<svg class="a" style="left:1747px;top:1041px;" width="22" height="16" viewBox="0 0 22 16"><path d="M1 5.5 H5 L10 1 V15 L5 10.5 H1 Z" fill="none" stroke="#fff" stroke-width="1.4"/><path d="M13 5 C14.5 6.5 14.5 9.5 13 11 M15.5 3 C18.5 5.5 18.5 10.5 15.5 13 M18 1 C22.5 4.5 22.5 11.5 18 15" fill="none" stroke="#fff" stroke-width="1.4"/></svg>
<svg class="a" style="left:1778px;top:1040px;" width="21" height="16" viewBox="0 0 21 16"><rect x="1" y="4" width="17" height="11" rx="2" fill="none" stroke="#fff" stroke-width="1.4"/><rect x="18.5" y="7.5" width="2" height="4" fill="#fff"/><rect x="3" y="6" width="10" height="7" fill="#fff"/><path d="M6 0 L3.5 5 H7 L5 9" fill="none" stroke="#fff" stroke-width="1.2"/></svg>
<div class="t" style="left:1823.75px;top:1032.7px;font-size:14.5px;color:#ffffff;font-weight:400;transform:scaleX(0.9883);transform-origin:0 0;">09:36 a. m.</div>
<div class="t" style="left:1819.00px;top:1052.5px;font-size:14.5px;color:#ffffff;font-weight:400;transform:scaleX(1.0685);transform-origin:0 0;">12/11/2025</div>
</body></html>
